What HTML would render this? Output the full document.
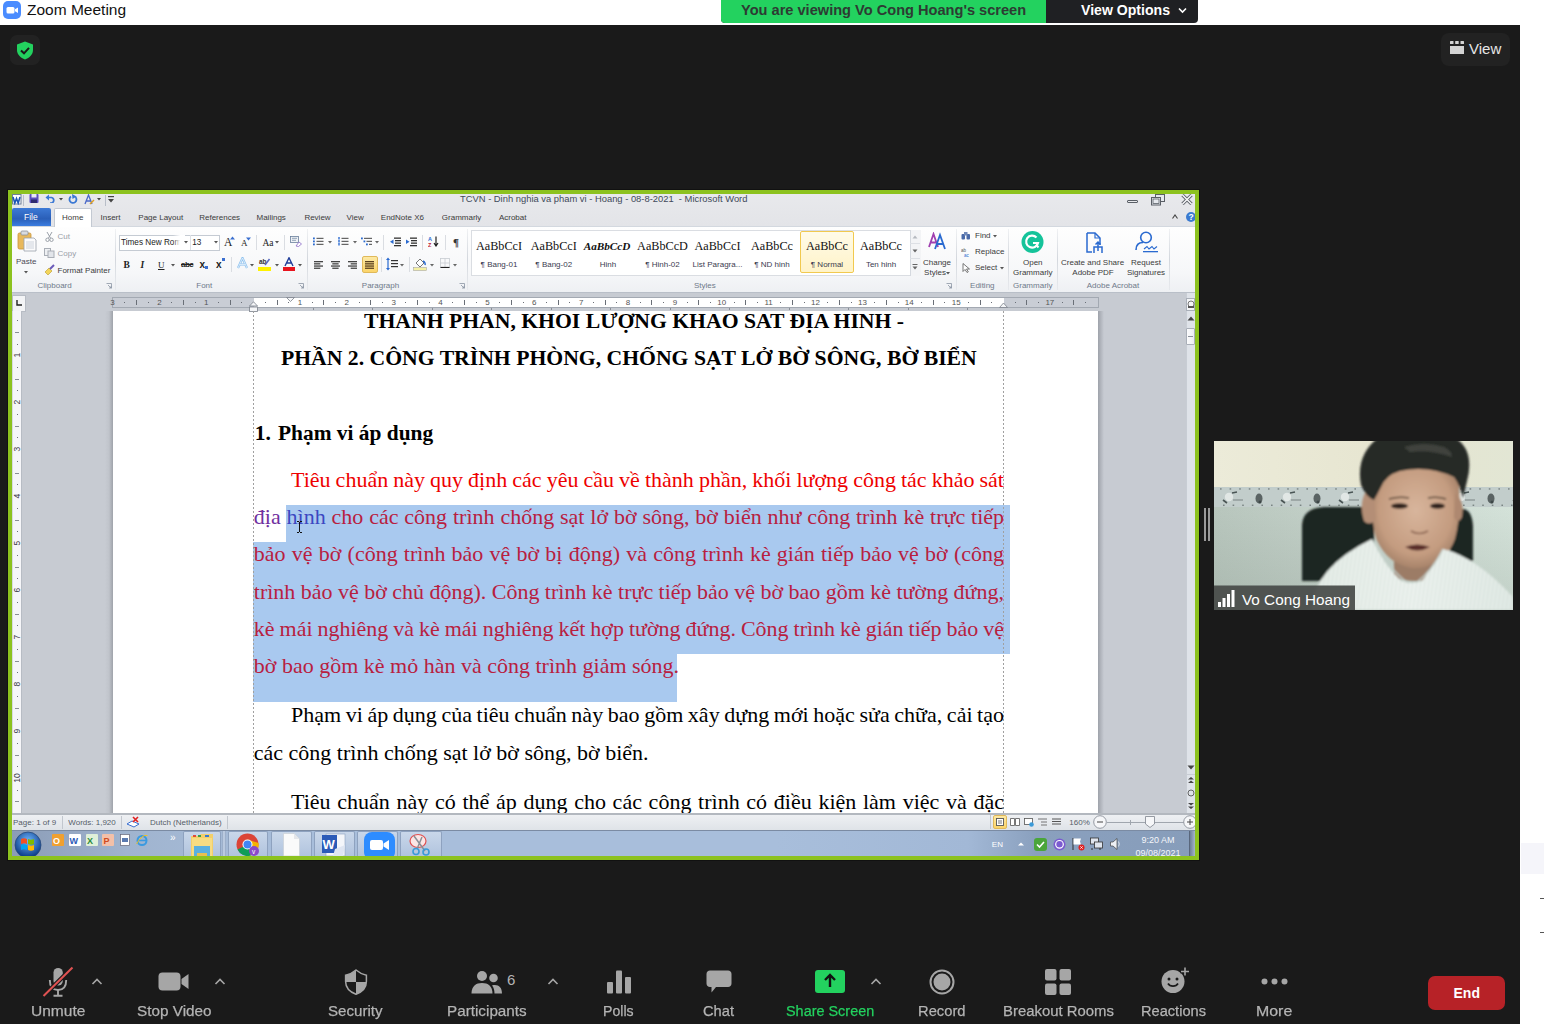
<!DOCTYPE html>
<html><head><meta charset="utf-8">
<style>
*{box-sizing:border-box}
body{margin:0;width:1544px;height:1024px;position:relative;overflow:hidden;background:#1a1a1a;font-family:"Liberation Sans",sans-serif}
.a{position:absolute;white-space:nowrap}
#title{left:0;top:0;width:1544px;height:25px;background:#fff}
#rstrip{left:1520px;top:25px;width:24px;height:999px;background:#fff}
.tl{color:#b4b4b4;font-size:15px;top:1003px;line-height:17px;-webkit-text-stroke:0.25px currentColor}
#W{left:0;top:0;width:1544px;height:1024px;clip-path:inset(194px 349px 168px 12px)}
.s{font-size:8px;line-height:9px;color:#3c3c3c}
.g{font-size:8px;line-height:9px;color:#6b7788}
.sep{width:1px;background:#d5d9df}
.d{font-family:"Liberation Serif",serif;font-size:22px;line-height:26px}
</style></head><body>

<div class="a" id="title">
  <svg class="a" style="left:3px;top:1px" width="18" height="18" viewBox="0 0 18 18"><rect width="18" height="18" rx="5" fill="#4a8cff"/><rect x="3.5" y="6" width="8" height="6.5" rx="1.5" fill="#fff"/><path d="M12 8.3 L15 6.5 V12 L12 10.2Z" fill="#fff"/></svg>
  <div class="a" style="left:27px;top:1px;font-size:15.5px;color:#111">Zoom Meeting</div>
</div>
<div class="a" id="rstrip"></div>
<div class="a" style="left:1521px;top:843px;width:23px;height:31px;background:#f5f5fa"></div>
<div class="a" style="left:1540px;top:898px;width:4px;height:1px;background:#555"></div>
<div class="a" style="left:1540px;top:932px;width:4px;height:1px;background:#555"></div>
<!-- banner -->
<div class="a" style="left:721px;top:0;width:477px;height:23px;border-radius:0 0 4px 4px;overflow:hidden;background:#1f2023">
  <div class="a" style="left:0;top:0;width:325px;height:23px;background:#23d25f"></div>
  <div class="a" style="left:20px;top:1.7px;font-size:14.6px;font-weight:bold;color:#2d3b33;line-height:17px">You are viewing Vo Cong Hoang's screen</div>
  <div class="a" style="left:360px;top:1.7px;font-size:14.1px;font-weight:bold;color:#fff;line-height:17px">View Options</div>
  <svg class="a" style="left:457px;top:7px" width="9" height="7" viewBox="0 0 9 7"><path d="M1 1.5 L4.5 5 L8 1.5" stroke="#fff" stroke-width="1.6" fill="none"/></svg>
</div>
<!-- shield -->
<div class="a" style="left:10px;top:35px;width:30px;height:30px;border-radius:7px;background:#222"></div>
<svg class="a" style="left:16px;top:41px" width="18" height="19" viewBox="0 0 18 19"><path d="M9 0.5 L17 3.5 V9 C17 13.5 13.5 16.8 9 18.5 C4.5 16.8 1 13.5 1 9 V3.5 Z" fill="#23d25f"/><path d="M5 9.5 L8 12.3 L13 6.8" stroke="#1a1a1a" stroke-width="2" fill="none"/></svg>
<!-- view button -->
<div class="a" style="left:1441px;top:33px;width:69px;height:33px;border-radius:8px;background:#222"></div>
<svg class="a" style="left:1450px;top:41px" width="14" height="13" viewBox="0 0 14 13"><rect x="0" y="0" width="3.5" height="3" rx=".5" fill="#d4d4d4"/><rect x="5.2" y="0" width="3.5" height="3" rx=".5" fill="#d4d4d4"/><rect x="10.5" y="0" width="3.5" height="3" rx=".5" fill="#d4d4d4"/><rect x="0" y="5" width="14" height="8" fill="#d4d4d4"/></svg>
<div class="a" style="left:1469px;top:39.5px;font-size:15px;color:#e6e6e6;line-height:17px">View</div>
<div class="a" style="left:7px;top:189px;width:1193px;height:672px;background:#111"></div>
<div class="a" style="left:8px;top:190px;width:1191px;height:670px;background:#8cc21f"></div>
<div class="a" id="W">
<div class="a" style="left:12px;top:194px;width:1183px;height:32px;background:linear-gradient(#e8e9ec,#e3e4e8)"></div>
<div class="a" style="left:12px;top:226px;width:1183px;height:67px;background:linear-gradient(#fefefe,#f6f7f9 70%,#eef0f3);border-top:1px solid #d3d8df;border-bottom:1px solid #b9bfc8"></div>
<div class="a" style="left:12px;top:293px;width:1183px;height:522px;background:#c7cbd2"></div>
<div class="a" style="left:105px;top:311px;width:8px;height:504px;background:linear-gradient(90deg,rgba(160,165,172,0),#c0c4cb 50%,#9fa3aa)"></div>
<div class="a" style="left:113px;top:311px;width:985px;height:504px;background:#fff"></div>
<div class="a" style="left:12px;top:813px;width:1183px;height:17px;background:linear-gradient(#eef0f3,#dfe3e8);border-top:2px solid #b3b8bf"></div>
<div class="a" style="left:12px;top:830px;width:1183px;height:26px;background:#a7bedb"></div>
<svg class="a" style="left:12px;top:194px" width="10" height="11" viewBox="0 0 10 11"><rect x="0.5" y="0.5" width="8.5" height="9.5" fill="#fff" stroke="#6f7f98"/><path d="M1 3 L2.8 9 L4.5 4.5 L6.2 9 L8 3" stroke="#1d56b4" stroke-width="1.6" fill="none"/></svg>
<div class="a" style="left:23px;top:195px;width:1px;height:11px;background:#b8bec8;"></div>
<svg class="a" style="left:29px;top:194px" width="10" height="9" viewBox="0 0 10 9"><rect x="0.5" y="0" width="9" height="9" rx="1" fill="#5b4fbf"/><rect x="2.5" y="0" width="5" height="3.5" fill="#e8e8f8"/><rect x="2" y="5.5" width="6" height="3.5" fill="#2e2a6e"/></svg>
<svg class="a" style="left:45px;top:194px" width="10" height="9" viewBox="0 0 10 9"><path d="M3 3.5 H6.5 A2.8 2.8 0 0 1 6.5 9 H5" stroke="#3a78d4" stroke-width="1.7" fill="none"/><path d="M0.5 3.5 L4 0.5 V6.5Z" fill="#3a78d4"/></svg>
<svg class="a" style="left:59px;top:198.3px" width="4" height="3" viewBox="0 0 4 3"><path d="M0 0H4L2 2.4Z" fill="#444"/></svg>
<svg class="a" style="left:68px;top:194px" width="10" height="10" viewBox="0 0 10 10"><path d="M7.5 3 A3.5 3.5 0 1 1 3 2.5" stroke="#3a78d4" stroke-width="1.8" fill="none"/><path d="M4 0 L8.5 2.5 L4.5 5Z" fill="#3a78d4"/></svg>
<svg class="a" style="left:84px;top:194px" width="11" height="11" viewBox="0 0 11 11"><path d="M1 10 L4.5 1 L8 10 M2.3 7 H6.7" stroke="#4a68c8" stroke-width="1.3" fill="none"/><path d="M6 10 L10 6" stroke="#e0a020" stroke-width="1.5"/></svg>
<svg class="a" style="left:97px;top:198.3px" width="4" height="3" viewBox="0 0 4 3"><path d="M0 0H4L2 2.4Z" fill="#444"/></svg>
<div class="a" style="left:105px;top:195px;width:1px;height:11px;background:#b8bec8;"></div>
<svg class="a" style="left:108px;top:196px" width="6" height="7" viewBox="0 0 6 7"><rect x="0" y="0" width="6" height="1.2" fill="#444"/><path d="M0 3H6L3 6.5Z" fill="#444"/></svg>
<div class="a" style="left:460px;top:193.49px;font-size:9.4px;line-height:12px;color:#3f4a5a;">TCVN - Dinh nghia va pham vi - Hoang - 08-8-2021&nbsp; - Microsoft Word</div>
<div class="a" style="left:1127px;top:200px;width:11px;height:3px;background:transparent;border:1px solid #5a5f66;border-radius:1px"></div>
<svg class="a" style="left:1151px;top:194px" width="15" height="12" viewBox="0 0 15 12"><rect x="4.5" y="0.5" width="9" height="7" fill="#e6e9ee" stroke="#5a5f66"/><rect x="0.5" y="3.5" width="9" height="7.5" fill="#e6e9ee" stroke="#5a5f66"/><rect x="2" y="5" width="6" height="4.5" fill="none" stroke="#5a5f66" stroke-width="0.8"/></svg>
<svg class="a" style="left:1181px;top:194px" width="12" height="11" viewBox="0 0 12 11"><path d="M1.5 1 L10.5 10 M10.5 1 L1.5 10" stroke="#5a5f66" stroke-width="3.2"/><path d="M1.5 1 L10.5 10 M10.5 1 L1.5 10" stroke="#f4f5f7" stroke-width="1.6"/></svg>
<div class="a" style="left:12px;top:208px;width:39px;height:18px;background:linear-gradient(#3d7ad6,#2a5fb8 60%,#3b7de0);border-radius:2px 2px 0 0"></div>
<div class="a" style="left:24px;top:212.09px;font-size:8.5px;line-height:11px;color:#fff;">File</div>
<div class="a" style="left:54px;top:208px;width:38px;height:19px;background:#fff;border:1px solid #c3c9d2;border-bottom:none;border-radius:2px 2px 0 0"></div>
<div class="a" style="left:62px;top:212.76px;font-size:8px;line-height:10px;color:#3b3b3b;">Home</div>
<div class="a" style="left:100.5px;top:212.76px;font-size:8px;line-height:10px;color:#3b3b3b;">Insert</div>
<div class="a" style="left:138.3px;top:212.76px;font-size:8px;line-height:10px;color:#3b3b3b;">Page Layout</div>
<div class="a" style="left:199.2px;top:212.76px;font-size:8px;line-height:10px;color:#3b3b3b;">References</div>
<div class="a" style="left:256.5px;top:212.76px;font-size:8px;line-height:10px;color:#3b3b3b;">Mailings</div>
<div class="a" style="left:304.4px;top:212.76px;font-size:8px;line-height:10px;color:#3b3b3b;">Review</div>
<div class="a" style="left:346.6px;top:212.76px;font-size:8px;line-height:10px;color:#3b3b3b;">View</div>
<div class="a" style="left:380.8px;top:212.76px;font-size:8px;line-height:10px;color:#3b3b3b;">EndNote X6</div>
<div class="a" style="left:441.8px;top:212.76px;font-size:8px;line-height:10px;color:#3b3b3b;">Grammarly</div>
<div class="a" style="left:498.9px;top:212.76px;font-size:8px;line-height:10px;color:#3b3b3b;">Acrobat</div>
<svg class="a" style="left:1172px;top:214px" width="6" height="5" viewBox="0 0 6 5"><path d="M0.5 4.5 L3 1 L5.5 4.5" stroke="#444" stroke-width="1.1" fill="none"/></svg>
<svg class="a" style="left:1186px;top:212px" width="10" height="10" viewBox="0 0 10 10"><circle cx="5" cy="5" r="5" fill="#3a7ad0"/><text x="5" y="8.3" font-size="8.5" font-weight="bold" text-anchor="middle" fill="#fff" font-family="Liberation Sans">?</text></svg>
<div class="a" style="left:115px;top:229px;width:1px;height:61px;background:linear-gradient(rgba(210,214,220,0.3),#d3d7dd 50%,rgba(210,214,220,0.3));"></div>
<div class="a" style="left:307px;top:229px;width:1px;height:61px;background:linear-gradient(rgba(210,214,220,0.3),#d3d7dd 50%,rgba(210,214,220,0.3));"></div>
<div class="a" style="left:467px;top:229px;width:1px;height:61px;background:linear-gradient(rgba(210,214,220,0.3),#d3d7dd 50%,rgba(210,214,220,0.3));"></div>
<div class="a" style="left:956px;top:229px;width:1px;height:61px;background:linear-gradient(rgba(210,214,220,0.3),#d3d7dd 50%,rgba(210,214,220,0.3));"></div>
<div class="a" style="left:1008px;top:229px;width:1px;height:61px;background:linear-gradient(rgba(210,214,220,0.3),#d3d7dd 50%,rgba(210,214,220,0.3));"></div>
<div class="a" style="left:1057px;top:229px;width:1px;height:61px;background:linear-gradient(rgba(210,214,220,0.3),#d3d7dd 50%,rgba(210,214,220,0.3));"></div>
<div class="a" style="left:1169px;top:229px;width:1px;height:61px;background:linear-gradient(rgba(210,214,220,0.3),#d3d7dd 50%,rgba(210,214,220,0.3));"></div>
<div class="a" style="left:37.475px;top:281.16px;font-size:8px;line-height:10px;color:#6f7a8a;">Clipboard</div>
<div class="a" style="left:196.2921875px;top:281.16px;font-size:8px;line-height:10px;color:#6f7a8a;">Font</div>
<div class="a" style="left:361.8203125px;top:281.16px;font-size:8px;line-height:10px;color:#6f7a8a;">Paragraph</div>
<div class="a" style="left:693.9015625px;top:281.16px;font-size:8px;line-height:10px;color:#6f7a8a;">Styles</div>
<div class="a" style="left:970.065625px;top:281.16px;font-size:8px;line-height:10px;color:#6f7a8a;">Editing</div>
<div class="a" style="left:1013.01875px;top:281.16px;font-size:8px;line-height:10px;color:#6f7a8a;">Grammarly</div>
<div class="a" style="left:1086.7578125px;top:281.16px;font-size:8px;line-height:10px;color:#6f7a8a;">Adobe Acrobat</div>
<svg class="a" style="left:106px;top:283px" width="6" height="6" viewBox="0 0 6 6"><path d="M0.5 0.5H5.5V5.5" stroke="#8a94a3" fill="none" stroke-width="0.8"/><path d="M2 2 L5 5 M3 5H5V3" stroke="#8a94a3" fill="none" stroke-width="0.8"/></svg>
<svg class="a" style="left:298px;top:283px" width="6" height="6" viewBox="0 0 6 6"><path d="M0.5 0.5H5.5V5.5" stroke="#8a94a3" fill="none" stroke-width="0.8"/><path d="M2 2 L5 5 M3 5H5V3" stroke="#8a94a3" fill="none" stroke-width="0.8"/></svg>
<svg class="a" style="left:459px;top:283px" width="6" height="6" viewBox="0 0 6 6"><path d="M0.5 0.5H5.5V5.5" stroke="#8a94a3" fill="none" stroke-width="0.8"/><path d="M2 2 L5 5 M3 5H5V3" stroke="#8a94a3" fill="none" stroke-width="0.8"/></svg>
<svg class="a" style="left:946px;top:283px" width="6" height="6" viewBox="0 0 6 6"><path d="M0.5 0.5H5.5V5.5" stroke="#8a94a3" fill="none" stroke-width="0.8"/><path d="M2 2 L5 5 M3 5H5V3" stroke="#8a94a3" fill="none" stroke-width="0.8"/></svg>
<svg class="a" style="left:17px;top:230px" width="20" height="22" viewBox="0 0 20 22"><rect x="1" y="3" width="13" height="16" rx="1.5" fill="#e8b85c" stroke="#c89438" stroke-width="0.8"/><rect x="4" y="1" width="7" height="4" rx="1" fill="#d8dbe0" stroke="#8e939b" stroke-width="0.8"/><path d="M7 8 H17 L19 10 V21 H7Z" fill="#fbfbfc" stroke="#9aa1ab" stroke-width="0.8"/><rect x="9" y="11" width="8" height="8" fill="#e4e7ec"/></svg>
<div class="a" style="left:16px;top:257.46px;font-size:8px;line-height:10px;color:#4a4a55;">Paste</div>
<svg class="a" style="left:23.7px;top:270.8px" width="4" height="3" viewBox="0 0 4 3"><path d="M0 0H4L2 2.4Z" fill="#555"/></svg>
<svg class="a" style="left:45px;top:232px" width="9" height="10" viewBox="0 0 9 10"><path d="M2 0 L5.5 6 M7 0 L3.5 6" stroke="#9aa0a8" stroke-width="1"/><circle cx="2.5" cy="7.8" r="1.7" fill="none" stroke="#9aa0a8"/><circle cx="6.5" cy="7.8" r="1.7" fill="none" stroke="#9aa0a8"/></svg>
<div class="a" style="left:57.5px;top:232.36px;font-size:8px;line-height:10px;color:#9aa0a8;">Cut</div>
<svg class="a" style="left:44px;top:248px" width="11" height="10" viewBox="0 0 11 10"><rect x="0.5" y="0.5" width="6" height="7" fill="#eef0f3" stroke="#a9aeb6"/><rect x="4" y="3" width="6" height="6.5" fill="#e2e5ea" stroke="#a9aeb6"/></svg>
<div class="a" style="left:57.5px;top:249.46px;font-size:8px;line-height:10px;color:#9aa0a8;">Copy</div>
<svg class="a" style="left:44px;top:264px" width="11" height="11" viewBox="0 0 11 11"><path d="M1 8 L5 4 L8 7 L4 11Z" fill="#f3d55b" stroke="#b89a2a" stroke-width="0.6"/><path d="M6 5 L10 1" stroke="#6a5ab8" stroke-width="2"/></svg>
<div class="a" style="left:57.5px;top:265.56px;font-size:8px;line-height:10px;color:#3b3b3b;">Format Painter</div>
<div class="a" style="left:118.5px;top:234.5px;width:101px;height:16px;background:#fff;border:1px solid #c5cbd3"></div>
<div class="a" style="left:190px;top:235px;width:1px;height:15px;background:#dde1e6;"></div>
<div class="a" style="left:121px;top:236.79px;font-size:8.2px;line-height:11px;color:#222;">Times New Rom</div>
<div class="a" style="left:173px;top:235px;width:12px;height:15px;background:linear-gradient(90deg,rgba(255,255,255,0),#fff 60%);"></div>
<svg class="a" style="left:183.8px;top:241.3px" width="4" height="3" viewBox="0 0 4 3"><path d="M0 0H4L2 2.4Z" fill="#555"/></svg>
<div class="a" style="left:192.3px;top:236.79px;font-size:8.2px;line-height:11px;color:#222;">13</div>
<svg class="a" style="left:213.6px;top:241.3px" width="4" height="3" viewBox="0 0 4 3"><path d="M0 0H4L2 2.4Z" fill="#555"/></svg>
<div class="a" style="left:224px;top:235.00px;font-size:11.5px;line-height:15px;color:#222;font-family:'Liberation Serif';">A</div>
<svg class="a" style="left:230px;top:236px" width="5" height="4" viewBox="0 0 5 4"><path d="M0 3.5 L2.5 0.5 L5 3.5Z" fill="#3a6fd0"/></svg>
<div class="a" style="left:241px;top:237.33px;font-size:9px;line-height:12px;color:#222;font-family:'Liberation Serif';">A</div>
<svg class="a" style="left:246px;top:237px" width="5" height="4" viewBox="0 0 5 4"><path d="M0 0.5 L2.5 3.5 L5 0.5Z" fill="#3a6fd0"/></svg>
<div class="a" style="left:255.7px;top:235px;width:1px;height:15px;background:#dadde2;"></div>
<div class="a" style="left:262.5px;top:237.16px;font-size:9.5px;line-height:12px;color:#222;font-family:'Liberation Serif';">Aa</div>
<svg class="a" style="left:275px;top:241.3px" width="4" height="3" viewBox="0 0 4 3"><path d="M0 0H4L2 2.4Z" fill="#555"/></svg>
<div class="a" style="left:284.2px;top:235px;width:1px;height:15px;background:#dadde2;"></div>
<svg class="a" style="left:290px;top:236px" width="12" height="11" viewBox="0 0 12 11"><rect x="0.5" y="0.5" width="8" height="6" fill="#eef1f5" stroke="#6a7f9c" stroke-width="0.8"/><path d="M2 2.3H7 M2 4.3H6" stroke="#6a7f9c" stroke-width="0.7"/><path d="M6 10 L9 6 L11.5 8 L8.5 10.5Z" fill="#fff" stroke="#8a6ac8" stroke-width="0.8"/></svg>
<div class="a" style="left:123.5px;top:258.86px;font-size:9.5px;line-height:12px;color:#222;font-weight:bold;font-family:'Liberation Serif';">B</div>
<div class="a" style="left:140.5px;top:258.86px;font-size:9.5px;line-height:12px;color:#222;font-family:'Liberation Serif';font-style:italic;font-weight:bold">I</div>
<div class="a" style="left:158px;top:258.53px;font-size:9px;line-height:12px;color:#222;font-family:'Liberation Serif';text-decoration:underline">U</div>
<svg class="a" style="left:171.2px;top:263.8px" width="4" height="3" viewBox="0 0 4 3"><path d="M0 0H4L2 2.4Z" fill="#555"/></svg>
<div class="a" style="left:181px;top:259.86px;font-size:8px;line-height:10px;color:#222;font-weight:bold;text-decoration:line-through;letter-spacing:-0.5px">abc</div>
<div class="a" style="left:199.4px;top:257.69px;font-size:10px;line-height:13px;color:#222;font-weight:bold;">x</div>
<svg class="a" style="left:205px;top:266px" width="3" height="3" viewBox="0 0 3 3"><rect width="3" height="3" fill="#3a6fd0"/></svg>
<div class="a" style="left:216px;top:257.69px;font-size:10px;line-height:13px;color:#222;font-weight:bold;">x</div>
<svg class="a" style="left:222px;top:258px" width="3" height="3" viewBox="0 0 3 3"><rect width="3" height="3" fill="#3a6fd0"/></svg>
<div class="a" style="left:231px;top:257px;width:1px;height:15px;background:#dadde2;"></div>
<svg class="a" style="left:237px;top:257px" width="11" height="12" viewBox="0 0 11 12"><path d="M1 11 L5.5 1 L10 11 M3 7.5 H8" stroke="#8cc0ee" stroke-width="2.2" fill="none"/><path d="M1 11 L5.5 1 L10 11 M3 7.5 H8" stroke="#eaf4fd" stroke-width="0.8" fill="none"/></svg>
<svg class="a" style="left:250.2px;top:263.8px" width="4" height="3" viewBox="0 0 4 3"><path d="M0 0H4L2 2.4Z" fill="#555"/></svg>
<svg class="a" style="left:258px;top:257px" width="13" height="14" viewBox="0 0 13 14"><text x="1" y="7" font-size="6.5" font-weight="bold" fill="#333" font-family="Liberation Sans">ab</text><path d="M7 8 L11.5 2" stroke="#5a6abf" stroke-width="1.6"/><rect x="0" y="10" width="13" height="4" fill="#fff200"/></svg>
<svg class="a" style="left:274.8px;top:263.8px" width="4" height="3" viewBox="0 0 4 3"><path d="M0 0H4L2 2.4Z" fill="#555"/></svg>
<svg class="a" style="left:283px;top:257px" width="12" height="14" viewBox="0 0 12 14"><path d="M2 9 L6 0.8 L10 9 M3.7 6 H8.3" stroke="#1f3d99" stroke-width="1.4" fill="none"/><rect x="0" y="10" width="12" height="4" fill="#e8141e"/></svg>
<svg class="a" style="left:298.4px;top:263.8px" width="4" height="3" viewBox="0 0 4 3"><path d="M0 0H4L2 2.4Z" fill="#555"/></svg>
<svg class="a" style="left:313px;top:237px" width="11" height="10" viewBox="0 0 11 10"><rect x="0" y="0.5" width="1.8" height="1.8" fill="#2a6ad0"/><rect x="3.5" y="0.8" width="7" height="1.1" fill="#555"/><rect x="0" y="3.5" width="1.8" height="1.8" fill="#2a6ad0"/><rect x="3.5" y="3.8" width="7" height="1.1" fill="#555"/><rect x="0" y="6.5" width="1.8" height="1.8" fill="#2a6ad0"/><rect x="3.5" y="6.8" width="7" height="1.1" fill="#555"/></svg>
<svg class="a" style="left:328.3px;top:240.8px" width="4" height="3" viewBox="0 0 4 3"><path d="M0 0H4L2 2.4Z" fill="#666"/></svg>
<svg class="a" style="left:338px;top:237px" width="11" height="10" viewBox="0 0 11 10"><rect x="0.3" y="0" width="1.4" height="2.5" fill="#2a6ad0"/><rect x="3.5" y="0.8" width="7" height="1.1" fill="#555"/><rect x="0.3" y="3" width="1.4" height="2.5" fill="#2a6ad0"/><rect x="3.5" y="3.8" width="7" height="1.1" fill="#555"/><rect x="0.3" y="6" width="1.4" height="2.5" fill="#2a6ad0"/><rect x="3.5" y="6.8" width="7" height="1.1" fill="#555"/></svg>
<svg class="a" style="left:353px;top:240.8px" width="4" height="3" viewBox="0 0 4 3"><path d="M0 0H4L2 2.4Z" fill="#666"/></svg>
<svg class="a" style="left:361px;top:237px" width="12" height="11" viewBox="0 0 12 11"><rect x="0" y="0.5" width="1.8" height="1.8" fill="#2a6ad0"/><rect x="3" y="0.8" width="8" height="1.1" fill="#555"/><rect x="2.5" y="3.5" width="1.8" height="1.8" fill="#2a6ad0"/><rect x="5.5" y="3.8" width="5.5" height="1.1" fill="#555"/><rect x="5" y="6.5" width="1.8" height="1.8" fill="#2a6ad0"/><rect x="8" y="6.8" width="3" height="1.1" fill="#555"/></svg>
<svg class="a" style="left:374.6px;top:240.8px" width="4" height="3" viewBox="0 0 4 3"><path d="M0 0H4L2 2.4Z" fill="#666"/></svg>
<div class="a" style="left:383.4px;top:235px;width:1px;height:15px;background:#dadde2;"></div>
<svg class="a" style="left:390px;top:237px" width="11" height="10" viewBox="0 0 11 10"><rect x="4" y="0.5" width="7" height="1.3" fill="#333"/><rect x="5" y="3" width="6" height="1.3" fill="#333"/><rect x="5" y="5.5" width="6" height="1.3" fill="#333"/><rect x="4" y="8" width="7" height="1.3" fill="#333"/><path d="M0 4.8 L3.5 2.5 V7Z" fill="#2a6ad0"/></svg>
<svg class="a" style="left:406px;top:237px" width="11" height="10" viewBox="0 0 11 10"><rect x="4" y="0.5" width="7" height="1.3" fill="#333"/><rect x="5" y="3" width="6" height="1.3" fill="#333"/><rect x="5" y="5.5" width="6" height="1.3" fill="#333"/><rect x="4" y="8" width="7" height="1.3" fill="#333"/><path d="M3.5 4.8 L0 2.5 V7Z" fill="#2a6ad0"/></svg>
<div class="a" style="left:422.3px;top:235px;width:1px;height:15px;background:#dadde2;"></div>
<svg class="a" style="left:428px;top:236px" width="11" height="11" viewBox="0 0 11 11"><text x="0" y="5" font-size="5.5" fill="#2a6ad0" font-family="Liberation Sans" font-weight="bold">A</text><text x="0" y="10.5" font-size="5.5" fill="#c02030" font-family="Liberation Sans" font-weight="bold">Z</text><path d="M8 0.5 V9 M6 7 L8 10 L10 7" stroke="#222" stroke-width="1.2" fill="none"/></svg>
<div class="a" style="left:445.4px;top:235px;width:1px;height:15px;background:#dadde2;"></div>
<div class="a" style="left:453px;top:234.86px;font-size:11px;line-height:14px;color:#333;font-weight:bold;font-family:'Liberation Serif';">¶</div>
<svg class="a" style="left:314px;top:259.5px" width="9" height="10" viewBox="0 0 9 10"><rect x="0.0" y="1.0" width="9.0" height="1.3" fill="#444"/><rect x="0.0" y="3.2" width="6.3" height="1.3" fill="#444"/><rect x="0.0" y="5.4" width="9.0" height="1.3" fill="#444"/><rect x="0.0" y="7.6" width="6.3" height="1.3" fill="#444"/></svg>
<svg class="a" style="left:331px;top:259.5px" width="9" height="10" viewBox="0 0 9 10"><rect x="0.0" y="1.0" width="9.0" height="1.3" fill="#444"/><rect x="1.3" y="3.2" width="6.3" height="1.3" fill="#444"/><rect x="0.0" y="5.4" width="9.0" height="1.3" fill="#444"/><rect x="1.3" y="7.6" width="6.3" height="1.3" fill="#444"/></svg>
<svg class="a" style="left:348px;top:259.5px" width="9" height="10" viewBox="0 0 9 10"><rect x="0.0" y="1.0" width="9.0" height="1.3" fill="#444"/><rect x="2.7" y="3.2" width="6.3" height="1.3" fill="#444"/><rect x="0.0" y="5.4" width="9.0" height="1.3" fill="#444"/><rect x="2.7" y="7.6" width="6.3" height="1.3" fill="#444"/></svg>
<div class="a" style="left:361.5px;top:256.3px;width:16.5px;height:16.5px;background:linear-gradient(#fde9a4,#fbd46a);border:1px solid #e0b95a;border-radius:2px"></div>
<svg class="a" style="left:365px;top:259.5px" width="9" height="10" viewBox="0 0 9 10"><rect x="0.0" y="1.0" width="9.0" height="1.3" fill="#5a4020"/><rect x="0.0" y="3.2" width="9.0" height="1.3" fill="#5a4020"/><rect x="0.0" y="5.4" width="9.0" height="1.3" fill="#5a4020"/><rect x="0.0" y="7.6" width="9.0" height="1.3" fill="#5a4020"/></svg>
<div class="a" style="left:380.8px;top:257px;width:1px;height:15px;background:#dadde2;"></div>
<svg class="a" style="left:386px;top:257px" width="12" height="14" viewBox="0 0 12 14"><path d="M2 0.5 L0 3 H4Z M2 13.5 L0 11 H4Z" fill="#2a6ad0"/><rect x="1.4" y="3" width="1.2" height="8" fill="#2a6ad0"/><rect x="5" y="3" width="7" height="1.2" fill="#333"/><rect x="5" y="6" width="7" height="1.2" fill="#333"/><rect x="5" y="9" width="7" height="1.2" fill="#333"/></svg>
<svg class="a" style="left:399.7px;top:263.8px" width="4" height="3" viewBox="0 0 4 3"><path d="M0 0H4L2 2.4Z" fill="#666"/></svg>
<div class="a" style="left:409px;top:257px;width:1px;height:15px;background:#dadde2;"></div>
<svg class="a" style="left:413px;top:257px" width="14" height="14" viewBox="0 0 14 14"><path d="M3 6 L7 2 L11 6 L7 10Z" fill="#fff" stroke="#555" stroke-width="0.8"/><path d="M10 4 C12 5 12.5 7 12 8" stroke="#2a6ad0" stroke-width="1.5" fill="none"/><rect x="0.5" y="10.5" width="13" height="3" fill="#f5f0a0" stroke="#999" stroke-width="0.5"/></svg>
<svg class="a" style="left:430.2px;top:263.8px" width="4" height="3" viewBox="0 0 4 3"><path d="M0 0H4L2 2.4Z" fill="#666"/></svg>
<svg class="a" style="left:440px;top:258px" width="10" height="10" viewBox="0 0 10 10"><rect x="0.5" y="0.5" width="9" height="9" fill="none" stroke="#c8ccd2" stroke-width="0.8"/><path d="M5 0.5 V9.5 M0.5 5 H9.5" stroke="#c8ccd2" stroke-width="0.8"/><path d="M0.5 9.5 H9.5" stroke="#222" stroke-width="1.2"/></svg>
<svg class="a" style="left:453.3px;top:263.8px" width="4" height="3" viewBox="0 0 4 3"><path d="M0 0H4L2 2.4Z" fill="#666"/></svg>
<div class="a" style="left:471px;top:230px;width:450px;height:46px;background:#fff;border:1px solid #dadde2"></div>
<div class="a" style="left:475.984375px;top:237.97px;font-size:12.2px;line-height:16px;color:#111;font-family:'Liberation Serif';">AaBbCcI</div>
<div class="a" style="left:480.6171875px;top:259.76px;font-size:8px;line-height:10px;color:#3b3b50;">¶ Bang-01</div>
<div class="a" style="left:530.734375px;top:237.97px;font-size:12.2px;line-height:16px;color:#111;font-family:'Liberation Serif';">AaBbCcI</div>
<div class="a" style="left:535.3671875px;top:259.76px;font-size:8px;line-height:10px;color:#3b3b50;">¶ Bang-02</div>
<div class="a" style="left:583.7578125px;top:238.80px;font-size:11.2px;line-height:15px;color:#111;font-weight:bold;font-family:'Liberation Serif';font-style:italic;">AaBbCcD</div>
<div class="a" style="left:599.7734375px;top:259.76px;font-size:8px;line-height:10px;color:#3b3b50;">Hinh</div>
<div class="a" style="left:637.109375px;top:237.97px;font-size:12.2px;line-height:16px;color:#111;font-family:'Liberation Serif';">AaBbCcD</div>
<div class="a" style="left:645.2265625px;top:259.76px;font-size:8px;line-height:10px;color:#3b3b50;">¶ Hinh-02</div>
<div class="a" style="left:694.484375px;top:237.97px;font-size:12.2px;line-height:16px;color:#111;font-family:'Liberation Serif';">AaBbCcI</div>
<div class="a" style="left:692.59375px;top:259.76px;font-size:8px;line-height:10px;color:#3b3b50;">List Paragra...</div>
<div class="a" style="left:751.0078125px;top:237.97px;font-size:12.2px;line-height:16px;color:#111;font-family:'Liberation Serif';">AaBbCc</div>
<div class="a" style="left:754.2890625px;top:259.76px;font-size:8px;line-height:10px;color:#3b3b50;">¶ ND hinh</div>
<div class="a" style="left:799.5px;top:231.2px;width:54.5px;height:42.2px;background:linear-gradient(#fffbe8,#fff3c8);border:1px solid #f1c94f;border-radius:2px"></div>
<div class="a" style="left:806.0078125px;top:237.97px;font-size:12.2px;line-height:16px;color:#111;font-family:'Liberation Serif';">AaBbCc</div>
<div class="a" style="left:810.84375px;top:259.76px;font-size:8px;line-height:10px;color:#3b3b50;">¶ Normal</div>
<div class="a" style="left:860.0078125px;top:237.97px;font-size:12.2px;line-height:16px;color:#111;font-family:'Liberation Serif';">AaBbCc</div>
<div class="a" style="left:865.875px;top:259.76px;font-size:8px;line-height:10px;color:#3b3b50;">Ten hinh</div>
<div class="a" style="left:909.5px;top:230px;width:11px;height:46px;background:#f3f4f6;border-left:1px solid #d5d9df"></div>
<div class="a" style="left:910px;top:243px;width:10px;height:1px;background:#dde0e5;"></div>
<div class="a" style="left:910px;top:258px;width:10px;height:1px;background:#dde0e5;"></div>
<svg class="a" style="left:912px;top:235px" width="6" height="4" viewBox="0 0 6 4"><path d="M0.5 3.5 L3 0.5 L5.5 3.5Z" fill="#b5b9bf"/></svg>
<svg class="a" style="left:912px;top:249px" width="6" height="4" viewBox="0 0 6 4"><path d="M0.5 0.5 L3 3.5 L5.5 0.5Z" fill="#666"/></svg>
<svg class="a" style="left:912px;top:264px" width="6" height="6" viewBox="0 0 6 6"><rect x="0.5" y="0" width="5" height="1" fill="#666"/><path d="M0.5 2.5 L3 5.5 L5.5 2.5Z" fill="#666"/></svg>
<svg class="a" style="left:928px;top:232px" width="19" height="19" viewBox="0 0 19 19"><path d="M1 15 L5.5 2 L10 15 M3 10.5 H8" stroke="#a040b0" stroke-width="1.8" fill="none"/><path d="M7 17 L12 3 L17 17 M9 12 H15" stroke="#2a6ad0" stroke-width="1.8" fill="none"/></svg>
<div class="a" style="left:922.984375px;top:258.16px;font-size:8px;line-height:10px;color:#3b3b3b;">Change</div>
<div class="a" style="left:924.1015625px;top:268.46px;font-size:8px;line-height:10px;color:#3b3b3b;">Styles</div>
<svg class="a" style="left:945.5px;top:272.3px" width="4" height="3" viewBox="0 0 4 3"><path d="M0 0H4L2 2.4Z" fill="#555"/></svg>
<svg class="a" style="left:961px;top:232px" width="10" height="8" viewBox="0 0 10 8"><rect x="0.5" y="2" width="3.5" height="5.5" rx="1" fill="#4a6aa8"/><rect x="5.5" y="2" width="3.5" height="5.5" rx="1" fill="#4a6aa8"/><rect x="3" y="0" width="3.5" height="3.5" fill="#6f88b8"/></svg>
<div class="a" style="left:975px;top:230.96px;font-size:8px;line-height:10px;color:#3b3b3b;">Find</div>
<svg class="a" style="left:992.5px;top:234.8px" width="4" height="3" viewBox="0 0 4 3"><path d="M0 0H4L2 2.4Z" fill="#555"/></svg>
<svg class="a" style="left:961px;top:248px" width="10" height="9" viewBox="0 0 10 9"><text x="0" y="4" font-size="4.5" fill="#555" font-family="Liberation Sans">ab</text><text x="3" y="9" font-size="4.5" fill="#2a6ad0" font-family="Liberation Sans">ac</text></svg>
<div class="a" style="left:975px;top:247.26px;font-size:8px;line-height:10px;color:#3b3b3b;">Replace</div>
<svg class="a" style="left:962px;top:263px" width="8" height="10" viewBox="0 0 8 10"><path d="M1 0.5 V8.5 L3 6.5 L5 9.5 L6.3 8.8 L4.5 6 H7.5Z" fill="#fff" stroke="#555" stroke-width="0.8"/></svg>
<div class="a" style="left:975px;top:263.06px;font-size:8px;line-height:10px;color:#3b3b3b;">Select</div>
<svg class="a" style="left:999.5px;top:266.8px" width="4" height="3" viewBox="0 0 4 3"><path d="M0 0H4L2 2.4Z" fill="#555"/></svg>
<svg class="a" style="left:1021px;top:231px" width="23" height="22" viewBox="0 0 23 22"><circle cx="11.5" cy="11" r="11" fill="#15c39a"/><path d="M15.5 6.5 A6 6 0 1 0 17 12 H12" stroke="#fff" stroke-width="2.2" fill="none"/><path d="M15 13.5 L17.5 16.5" stroke="#fff" stroke-width="2"/></svg>
<div class="a" style="left:1023.0109375px;top:258.16px;font-size:8px;line-height:10px;color:#3b3b3b;">Open</div>
<div class="a" style="left:1013.01875px;top:268.46px;font-size:8px;line-height:10px;color:#3b3b3b;">Grammarly</div>
<svg class="a" style="left:1084px;top:232px" width="20" height="22" viewBox="0 0 20 22"><path d="M3 1 H11 L16 6 V13" stroke="#2a6ad0" stroke-width="1.5" fill="none"/><path d="M3 1 V20 H8" stroke="#2a6ad0" stroke-width="1.5" fill="none"/><path d="M11 1 V6 H16" stroke="#2a6ad0" stroke-width="1.2" fill="none"/><path d="M10 21 V15 H18 V21" stroke="#2a6ad0" stroke-width="1.5" fill="none"/><path d="M14 19 V10 M11.5 12.5 L14 10 L16.5 12.5" stroke="#2a6ad0" stroke-width="1.5" fill="none"/></svg>
<div class="a" style="left:1061.021875px;top:258.16px;font-size:8px;line-height:10px;color:#3b3b3b;">Create and Share</div>
<div class="a" style="left:1072.3203125px;top:268.46px;font-size:8px;line-height:10px;color:#3b3b3b;">Adobe PDF</div>
<svg class="a" style="left:1133px;top:231px" width="26" height="22" viewBox="0 0 26 22"><circle cx="13" cy="6.5" r="5.3" stroke="#2a6ad0" stroke-width="1.6" fill="none"/><path d="M3 19 C3 13 7 11.5 10 11.5" stroke="#2a6ad0" stroke-width="1.6" fill="none"/><path d="M11 18 L14 15.5 L16 18 L19 15.5 L21 18 L24 15.5" stroke="#2a6ad0" stroke-width="1.1" fill="none"/><rect x="10" y="20" width="15" height="1.3" fill="#2a6ad0"/></svg>
<div class="a" style="left:1131.1015625px;top:258.16px;font-size:8px;line-height:10px;color:#3b3b3b;">Request</div>
<div class="a" style="left:1126.875px;top:268.46px;font-size:8px;line-height:10px;color:#3b3b3b;">Signatures</div>
<div class="a" style="left:12px;top:294.5px;width:14px;height:17px;background:#f3f4f6;border:1px solid #b7bcc4"></div>
<svg class="a" style="left:16px;top:300px" width="6" height="6" viewBox="0 0 6 6"><path d="M1 0 V5 H6" stroke="#222" stroke-width="1.4" fill="none"/></svg>
<div class="a" style="left:112px;top:297px;width:987px;height:11px;background:#c9cdd5;border:1px solid #a3a9b2"></div>
<div class="a" style="left:253.5px;top:298px;width:750px;height:9px;background:#fff;"></div>
<div class="a" style="left:110.26343750000001px;top:298.16px;font-size:8px;line-height:10px;color:#555;">3</div>
<div class="a" style="left:124px;top:302px;width:1px;height:1px;background:#6a6f77;"></div>
<div class="a" style="left:136px;top:300px;width:1px;height:5px;background:#6a6f77;"></div>
<div class="a" style="left:148px;top:302px;width:1px;height:1px;background:#6a6f77;"></div>
<div class="a" style="left:157.1334375px;top:298.16px;font-size:8px;line-height:10px;color:#555;">2</div>
<div class="a" style="left:171px;top:302px;width:1px;height:1px;background:#6a6f77;"></div>
<div class="a" style="left:183px;top:300px;width:1px;height:5px;background:#6a6f77;"></div>
<div class="a" style="left:195px;top:302px;width:1px;height:1px;background:#6a6f77;"></div>
<div class="a" style="left:204.0034375px;top:298.16px;font-size:8px;line-height:10px;color:#555;">1</div>
<div class="a" style="left:218px;top:302px;width:1px;height:1px;background:#6a6f77;"></div>
<div class="a" style="left:230px;top:300px;width:1px;height:5px;background:#6a6f77;"></div>
<div class="a" style="left:241px;top:302px;width:1px;height:1px;background:#6a6f77;"></div>
<div class="a" style="left:265px;top:302px;width:1px;height:1px;background:#6a6f77;"></div>
<div class="a" style="left:277px;top:300px;width:1px;height:5px;background:#6a6f77;"></div>
<div class="a" style="left:288px;top:302px;width:1px;height:1px;background:#6a6f77;"></div>
<div class="a" style="left:297.74343749999997px;top:298.16px;font-size:8px;line-height:10px;color:#555;">1</div>
<div class="a" style="left:312px;top:302px;width:1px;height:1px;background:#6a6f77;"></div>
<div class="a" style="left:323px;top:300px;width:1px;height:5px;background:#6a6f77;"></div>
<div class="a" style="left:335px;top:302px;width:1px;height:1px;background:#6a6f77;"></div>
<div class="a" style="left:344.6134375px;top:298.16px;font-size:8px;line-height:10px;color:#555;">2</div>
<div class="a" style="left:359px;top:302px;width:1px;height:1px;background:#6a6f77;"></div>
<div class="a" style="left:370px;top:300px;width:1px;height:5px;background:#6a6f77;"></div>
<div class="a" style="left:382px;top:302px;width:1px;height:1px;background:#6a6f77;"></div>
<div class="a" style="left:391.4834375px;top:298.16px;font-size:8px;line-height:10px;color:#555;">3</div>
<div class="a" style="left:405px;top:302px;width:1px;height:1px;background:#6a6f77;"></div>
<div class="a" style="left:417px;top:300px;width:1px;height:5px;background:#6a6f77;"></div>
<div class="a" style="left:429px;top:302px;width:1px;height:1px;background:#6a6f77;"></div>
<div class="a" style="left:438.3534375px;top:298.16px;font-size:8px;line-height:10px;color:#555;">4</div>
<div class="a" style="left:452px;top:302px;width:1px;height:1px;background:#6a6f77;"></div>
<div class="a" style="left:464px;top:300px;width:1px;height:5px;background:#6a6f77;"></div>
<div class="a" style="left:476px;top:302px;width:1px;height:1px;background:#6a6f77;"></div>
<div class="a" style="left:485.2234375px;top:298.16px;font-size:8px;line-height:10px;color:#555;">5</div>
<div class="a" style="left:499px;top:302px;width:1px;height:1px;background:#6a6f77;"></div>
<div class="a" style="left:511px;top:300px;width:1px;height:5px;background:#6a6f77;"></div>
<div class="a" style="left:523px;top:302px;width:1px;height:1px;background:#6a6f77;"></div>
<div class="a" style="left:532.0934374999999px;top:298.16px;font-size:8px;line-height:10px;color:#555;">6</div>
<div class="a" style="left:546px;top:302px;width:1px;height:1px;background:#6a6f77;"></div>
<div class="a" style="left:558px;top:300px;width:1px;height:5px;background:#6a6f77;"></div>
<div class="a" style="left:569px;top:302px;width:1px;height:1px;background:#6a6f77;"></div>
<div class="a" style="left:578.9634374999999px;top:298.16px;font-size:8px;line-height:10px;color:#555;">7</div>
<div class="a" style="left:593px;top:302px;width:1px;height:1px;background:#6a6f77;"></div>
<div class="a" style="left:605px;top:300px;width:1px;height:5px;background:#6a6f77;"></div>
<div class="a" style="left:616px;top:302px;width:1px;height:1px;background:#6a6f77;"></div>
<div class="a" style="left:625.8334375px;top:298.16px;font-size:8px;line-height:10px;color:#555;">8</div>
<div class="a" style="left:640px;top:302px;width:1px;height:1px;background:#6a6f77;"></div>
<div class="a" style="left:651px;top:300px;width:1px;height:5px;background:#6a6f77;"></div>
<div class="a" style="left:663px;top:302px;width:1px;height:1px;background:#6a6f77;"></div>
<div class="a" style="left:672.7034375px;top:298.16px;font-size:8px;line-height:10px;color:#555;">9</div>
<div class="a" style="left:687px;top:302px;width:1px;height:1px;background:#6a6f77;"></div>
<div class="a" style="left:698px;top:300px;width:1px;height:5px;background:#6a6f77;"></div>
<div class="a" style="left:710px;top:302px;width:1px;height:1px;background:#6a6f77;"></div>
<div class="a" style="left:717.346875px;top:298.16px;font-size:8px;line-height:10px;color:#555;">10</div>
<div class="a" style="left:734px;top:302px;width:1px;height:1px;background:#6a6f77;"></div>
<div class="a" style="left:745px;top:300px;width:1px;height:5px;background:#6a6f77;"></div>
<div class="a" style="left:757px;top:302px;width:1px;height:1px;background:#6a6f77;"></div>
<div class="a" style="left:764.51375px;top:298.16px;font-size:8px;line-height:10px;color:#555;">11</div>
<div class="a" style="left:780px;top:302px;width:1px;height:1px;background:#6a6f77;"></div>
<div class="a" style="left:792px;top:300px;width:1px;height:5px;background:#6a6f77;"></div>
<div class="a" style="left:804px;top:302px;width:1px;height:1px;background:#6a6f77;"></div>
<div class="a" style="left:811.086875px;top:298.16px;font-size:8px;line-height:10px;color:#555;">12</div>
<div class="a" style="left:827px;top:302px;width:1px;height:1px;background:#6a6f77;"></div>
<div class="a" style="left:839px;top:300px;width:1px;height:5px;background:#6a6f77;"></div>
<div class="a" style="left:851px;top:302px;width:1px;height:1px;background:#6a6f77;"></div>
<div class="a" style="left:857.956875px;top:298.16px;font-size:8px;line-height:10px;color:#555;">13</div>
<div class="a" style="left:874px;top:302px;width:1px;height:1px;background:#6a6f77;"></div>
<div class="a" style="left:886px;top:300px;width:1px;height:5px;background:#6a6f77;"></div>
<div class="a" style="left:898px;top:302px;width:1px;height:1px;background:#6a6f77;"></div>
<div class="a" style="left:904.826875px;top:298.16px;font-size:8px;line-height:10px;color:#555;">14</div>
<div class="a" style="left:921px;top:302px;width:1px;height:1px;background:#6a6f77;"></div>
<div class="a" style="left:933px;top:300px;width:1px;height:5px;background:#6a6f77;"></div>
<div class="a" style="left:944px;top:302px;width:1px;height:1px;background:#6a6f77;"></div>
<div class="a" style="left:951.696875px;top:298.16px;font-size:8px;line-height:10px;color:#555;">15</div>
<div class="a" style="left:968px;top:302px;width:1px;height:1px;background:#6a6f77;"></div>
<div class="a" style="left:980px;top:300px;width:1px;height:5px;background:#6a6f77;"></div>
<div class="a" style="left:991px;top:302px;width:1px;height:1px;background:#6a6f77;"></div>
<div class="a" style="left:1015px;top:302px;width:1px;height:1px;background:#6a6f77;"></div>
<div class="a" style="left:1026px;top:300px;width:1px;height:5px;background:#6a6f77;"></div>
<div class="a" style="left:1038px;top:302px;width:1px;height:1px;background:#6a6f77;"></div>
<div class="a" style="left:1045.4368749999999px;top:298.16px;font-size:8px;line-height:10px;color:#555;">17</div>
<div class="a" style="left:1062px;top:302px;width:1px;height:1px;background:#6a6f77;"></div>
<div class="a" style="left:1073px;top:300px;width:1px;height:5px;background:#6a6f77;"></div>
<div class="a" style="left:1085px;top:302px;width:1px;height:1px;background:#6a6f77;"></div>
<div class="a" style="left:313px;top:308px;width:1px;height:2px;background:#8a8f97;"></div>
<div class="a" style="left:372px;top:308px;width:1px;height:2px;background:#8a8f97;"></div>
<div class="a" style="left:432px;top:308px;width:1px;height:2px;background:#8a8f97;"></div>
<div class="a" style="left:491px;top:308px;width:1px;height:2px;background:#8a8f97;"></div>
<div class="a" style="left:551px;top:308px;width:1px;height:2px;background:#8a8f97;"></div>
<div class="a" style="left:610px;top:308px;width:1px;height:2px;background:#8a8f97;"></div>
<div class="a" style="left:670px;top:308px;width:1px;height:2px;background:#8a8f97;"></div>
<div class="a" style="left:729px;top:308px;width:1px;height:2px;background:#8a8f97;"></div>
<div class="a" style="left:789px;top:308px;width:1px;height:2px;background:#8a8f97;"></div>
<div class="a" style="left:848px;top:308px;width:1px;height:2px;background:#8a8f97;"></div>
<div class="a" style="left:908px;top:308px;width:1px;height:2px;background:#8a8f97;"></div>
<div class="a" style="left:967px;top:308px;width:1px;height:2px;background:#8a8f97;"></div>
<svg class="a" style="left:286px;top:296.5px" width="9" height="5" viewBox="0 0 9 5"><path d="M0.5 0.5 H8.5 L4.5 4.5Z" fill="#f5f6f8" stroke="#7a808a" stroke-width="0.8"/></svg>
<svg class="a" style="left:249px;top:301px" width="9" height="11" viewBox="0 0 9 11"><path d="M0.5 5 L4.5 0.8 L8.5 5Z" fill="#f5f6f8" stroke="#7a808a" stroke-width="0.8"/><rect x="0.5" y="6" width="8" height="4.5" fill="#f5f6f8" stroke="#7a808a" stroke-width="0.8"/></svg>
<svg class="a" style="left:999px;top:301.5px" width="9" height="6" viewBox="0 0 9 6"><path d="M0.5 5.5 L4.5 1 L8.5 5.5Z" fill="#f5f6f8" stroke="#7a808a" stroke-width="0.8"/></svg>
<div class="a" style="left:12px;top:311px;width:10px;height:502px;background:#f6f6f9;border-right:1px solid #b7bcc4;border-left:1px solid #d8dbe0"></div>
<div class="a" style="left:16.5px;top:320px;width:1px;height:1px;background:#6a6f77;"></div>
<div class="a" style="left:15px;top:332px;width:4px;height:1px;background:#8a8f97;"></div>
<div class="a" style="left:16.5px;top:344px;width:1px;height:1px;background:#6a6f77;"></div>
<div class="a" style="left:12px;top:349.3px;width:10px;height:12px;font-size:8.5px;line-height:12px;color:#3a3a48;text-align:center;transform:rotate(-90deg)">1</div>
<div class="a" style="left:16.5px;top:367px;width:1px;height:1px;background:#6a6f77;"></div>
<div class="a" style="left:15px;top:379px;width:4px;height:1px;background:#8a8f97;"></div>
<div class="a" style="left:16.5px;top:390px;width:1px;height:1px;background:#6a6f77;"></div>
<div class="a" style="left:12px;top:396.2px;width:10px;height:12px;font-size:8.5px;line-height:12px;color:#3a3a48;text-align:center;transform:rotate(-90deg)">2</div>
<div class="a" style="left:16.5px;top:414px;width:1px;height:1px;background:#6a6f77;"></div>
<div class="a" style="left:15px;top:426px;width:4px;height:1px;background:#8a8f97;"></div>
<div class="a" style="left:16.5px;top:437px;width:1px;height:1px;background:#6a6f77;"></div>
<div class="a" style="left:12px;top:443.2px;width:10px;height:12px;font-size:8.5px;line-height:12px;color:#3a3a48;text-align:center;transform:rotate(-90deg)">3</div>
<div class="a" style="left:16.5px;top:461px;width:1px;height:1px;background:#6a6f77;"></div>
<div class="a" style="left:15px;top:473px;width:4px;height:1px;background:#8a8f97;"></div>
<div class="a" style="left:16.5px;top:484px;width:1px;height:1px;background:#6a6f77;"></div>
<div class="a" style="left:12px;top:490.2px;width:10px;height:12px;font-size:8.5px;line-height:12px;color:#3a3a48;text-align:center;transform:rotate(-90deg)">4</div>
<div class="a" style="left:16.5px;top:508px;width:1px;height:1px;background:#6a6f77;"></div>
<div class="a" style="left:15px;top:520px;width:4px;height:1px;background:#8a8f97;"></div>
<div class="a" style="left:16.5px;top:531px;width:1px;height:1px;background:#6a6f77;"></div>
<div class="a" style="left:12px;top:537.1px;width:10px;height:12px;font-size:8.5px;line-height:12px;color:#3a3a48;text-align:center;transform:rotate(-90deg)">5</div>
<div class="a" style="left:16.5px;top:555px;width:1px;height:1px;background:#6a6f77;"></div>
<div class="a" style="left:15px;top:567px;width:4px;height:1px;background:#8a8f97;"></div>
<div class="a" style="left:16.5px;top:578px;width:1px;height:1px;background:#6a6f77;"></div>
<div class="a" style="left:12px;top:584.1px;width:10px;height:12px;font-size:8.5px;line-height:12px;color:#3a3a48;text-align:center;transform:rotate(-90deg)">6</div>
<div class="a" style="left:16.5px;top:602px;width:1px;height:1px;background:#6a6f77;"></div>
<div class="a" style="left:15px;top:614px;width:4px;height:1px;background:#8a8f97;"></div>
<div class="a" style="left:16.5px;top:625px;width:1px;height:1px;background:#6a6f77;"></div>
<div class="a" style="left:12px;top:631.1px;width:10px;height:12px;font-size:8.5px;line-height:12px;color:#3a3a48;text-align:center;transform:rotate(-90deg)">7</div>
<div class="a" style="left:16.5px;top:649px;width:1px;height:1px;background:#6a6f77;"></div>
<div class="a" style="left:15px;top:661px;width:4px;height:1px;background:#8a8f97;"></div>
<div class="a" style="left:16.5px;top:672px;width:1px;height:1px;background:#6a6f77;"></div>
<div class="a" style="left:12px;top:678.1px;width:10px;height:12px;font-size:8.5px;line-height:12px;color:#3a3a48;text-align:center;transform:rotate(-90deg)">8</div>
<div class="a" style="left:16.5px;top:696px;width:1px;height:1px;background:#6a6f77;"></div>
<div class="a" style="left:15px;top:708px;width:4px;height:1px;background:#8a8f97;"></div>
<div class="a" style="left:16.5px;top:719px;width:1px;height:1px;background:#6a6f77;"></div>
<div class="a" style="left:12px;top:725.0px;width:10px;height:12px;font-size:8.5px;line-height:12px;color:#3a3a48;text-align:center;transform:rotate(-90deg)">9</div>
<div class="a" style="left:16.5px;top:743px;width:1px;height:1px;background:#6a6f77;"></div>
<div class="a" style="left:15px;top:755px;width:4px;height:1px;background:#8a8f97;"></div>
<div class="a" style="left:16.5px;top:766px;width:1px;height:1px;background:#6a6f77;"></div>
<div class="a" style="left:12px;top:772.0px;width:10px;height:12px;font-size:8.5px;line-height:12px;color:#3a3a48;text-align:center;transform:rotate(-90deg)">10</div>
<div class="a" style="left:16.5px;top:790px;width:1px;height:1px;background:#6a6f77;"></div>
<div class="a" style="left:15px;top:801px;width:4px;height:1px;background:#8a8f97;"></div>
<div class="a" style="left:1186px;top:293px;width:9px;height:520px;background:#dfe3e9;border-left:1px solid #c8cdd4"></div>
<div class="a" style="left:1186px;top:298px;width:9px;height:13px;background:#f4f5f7;border:1px solid #a9afb8"></div>
<svg class="a" style="left:1187px;top:300px" width="8" height="9" viewBox="0 0 8 9"><circle cx="4" cy="4" r="3" fill="none" stroke="#555" stroke-width="0.8"/><rect x="1" y="6" width="6" height="2" fill="#555"/></svg>
<svg class="a" style="left:1187px;top:316px" width="8" height="5" viewBox="0 0 8 5"><path d="M0.5 4.5 L4 0.5 L7.5 4.5Z" fill="#444"/></svg>
<div class="a" style="left:1186px;top:328px;width:9px;height:17px;background:linear-gradient(90deg,#fbfbfc,#eceef2);border:1px solid #a9afb8;border-radius:1px"></div>
<div class="a" style="left:1188px;top:336px;width:5px;height:1px;background:#8a9099;"></div>
<svg class="a" style="left:1187px;top:765px" width="8" height="5" viewBox="0 0 8 5"><path d="M0.5 0.5 L4 4.5 L7.5 0.5Z" fill="#444"/></svg>
<div class="a" style="left:1186px;top:774px;width:9px;height:1px;background:#c8cdd4;"></div>
<svg class="a" style="left:1187px;top:777px" width="8" height="6" viewBox="0 0 8 6"><path d="M1 2.5 L4 0 L7 2.5Z M1 6 L4 3.5 L7 6Z" fill="#444"/></svg>
<svg class="a" style="left:1187px;top:789px" width="8" height="8" viewBox="0 0 8 8"><circle cx="4" cy="4" r="3" fill="#dfe3e9" stroke="#555" stroke-width="0.9"/></svg>
<svg class="a" style="left:1187px;top:803px" width="8" height="6" viewBox="0 0 8 6"><path d="M1 0 L4 2.5 L7 0Z M1 3.5 L4 6 L7 3.5Z" fill="#444"/></svg>
<div class="a" style="left:1098px;top:311px;width:6px;height:502px;background:linear-gradient(90deg,#9ea2aa,rgba(199,203,210,0));"></div>
<div class="a" style="left:13px;top:817.66px;font-size:8px;line-height:10px;color:#555d68;">Page: 1 of 9</div>
<div class="a" style="left:62px;top:816px;width:1px;height:13px;background:#c2c7ce;"></div>
<div class="a" style="left:68.3px;top:817.66px;font-size:8px;line-height:10px;color:#555d68;">Words: 1,920</div>
<div class="a" style="left:121px;top:816px;width:1px;height:13px;background:#c2c7ce;"></div>
<svg class="a" style="left:126px;top:816px" width="14" height="12" viewBox="0 0 14 12"><path d="M1 8 L6 5 L13 8 L8 11Z" fill="#fff" stroke="#3a6fd0" stroke-width="1"/><path d="M7 1 L12 6 M12 1 L7 6" stroke="#e02020" stroke-width="1.6"/></svg>
<div class="a" style="left:150px;top:817.66px;font-size:8px;line-height:10px;color:#555d68;">Dutch (Netherlands)</div>
<div class="a" style="left:226.8px;top:816px;width:1px;height:13px;background:#c2c7ce;"></div>
<div class="a" style="left:990px;top:815px;width:1px;height:14px;background:#c2c7ce;"></div>
<div class="a" style="left:993px;top:815px;width:14px;height:14px;background:linear-gradient(#fde9a4,#fbd46a);border:1px solid #e0b95a;border-radius:2px"></div>
<svg class="a" style="left:996px;top:818px" width="8" height="8" viewBox="0 0 8 8"><rect x="0.5" y="0.5" width="7" height="7" fill="#fff" stroke="#555" stroke-width="0.9"/><path d="M2 3H6M2 5H6" stroke="#555" stroke-width="0.8"/></svg>
<svg class="a" style="left:1010px;top:818px" width="10" height="8" viewBox="0 0 10 8"><path d="M0.5 0.5H4.5V7.5H0.5Z M5.5 0.5H9.5V7.5H5.5Z" fill="#fff" stroke="#555" stroke-width="0.8"/></svg>
<svg class="a" style="left:1024px;top:818px" width="10" height="9" viewBox="0 0 10 9"><rect x="0.5" y="0.5" width="8" height="6" fill="#fff" stroke="#555" stroke-width="0.8"/><circle cx="7.5" cy="6.5" r="2.3" fill="#3a9ad8"/></svg>
<svg class="a" style="left:1038px;top:818px" width="10" height="8" viewBox="0 0 10 8"><path d="M0 1H9M3 4H9M3 7H9" stroke="#666" stroke-width="0.9"/></svg>
<svg class="a" style="left:1052px;top:818px" width="10" height="8" viewBox="0 0 10 8"><path d="M0 1H9M0 3.5H9M0 6H9" stroke="#555" stroke-width="1"/></svg>
<div class="a" style="left:1069.3px;top:817.66px;font-size:8px;line-height:10px;color:#555d68;">160%</div>
<svg class="a" style="left:1093px;top:815px" width="14" height="14" viewBox="0 0 14 14"><circle cx="7" cy="7" r="6.3" fill="#f6f7f9" stroke="#8a9099" stroke-width="0.9"/><path d="M4 7H10" stroke="#444" stroke-width="1"/></svg>
<div class="a" style="left:1107px;top:822px;width:77px;height:1px;background:#a0a6ae;"></div>
<div class="a" style="left:1130px;top:820px;width:1px;height:5px;background:#a0a6ae;"></div>
<svg class="a" style="left:1145px;top:816px" width="10" height="12" viewBox="0 0 10 12"><path d="M0.5 0.5H9.5V8L5 11.5L0.5 8Z" fill="#f6f7f9" stroke="#8a9099" stroke-width="0.9"/></svg>
<svg class="a" style="left:1183px;top:815px" width="14" height="14" viewBox="0 0 14 14"><circle cx="7" cy="7" r="6.3" fill="#f6f7f9" stroke="#8a9099" stroke-width="0.9"/><path d="M4 7H10M7 4V10" stroke="#444" stroke-width="1"/></svg>
<div class="a" style="left:12px;top:830px;width:956px;height:26px;background:linear-gradient(90deg,#8b9cb6 0,#a0b4cf 12%,#a8bedb 30%,#a8bedb 80%,#a2b8d6);"></div>
<div class="a" style="left:968px;top:830px;width:227px;height:26px;background:linear-gradient(90deg,#a2b8d6,#8aa0be 30%,#879dba);"></div>
<div class="a" style="left:12px;top:830px;width:1183px;height:1px;background:#7b8ba3;"></div>
<svg class="a" style="left:14px;top:831px" width="28" height="26" viewBox="0 0 28 26"><defs><radialGradient id="orb" cx="50%" cy="35%" r="60%"><stop offset="0" stop-color="#6fb6ff"/><stop offset="1" stop-color="#0d3f8a"/></radialGradient></defs><circle cx="14" cy="14" r="13" fill="url(#orb)" stroke="#2a4a7a" stroke-width="0.8"/><path d="M7 8 Q10 6.5 13 8 V13 Q10 11.5 7 13Z" fill="#f25022"/><path d="M14 8 Q17 9.5 20 8 V13 Q17 14.5 14 13Z" fill="#7fba00"/><path d="M7 14 Q10 12.5 13 14 V19 Q10 17.5 7 19Z" fill="#00a4ef"/><path d="M14 14 Q17 15.5 20 14 V19 Q17 20.5 14 19Z" fill="#ffb900"/></svg>
<svg class="a" style="left:52px;top:834px" width="12" height="12" viewBox="0 0 12 12"><rect x="0" y="0" width="12" height="12" rx="1" fill="#f0a030"/><text x="1" y="9.5" font-size="9" font-weight="bold" fill="#fff" font-family="Liberation Sans">O</text></svg>
<svg class="a" style="left:69px;top:834px" width="12" height="12" viewBox="0 0 12 12"><rect x="0" y="0" width="12" height="12" rx="1" fill="#fff"/><text x="0.5" y="9.5" font-size="9" font-weight="bold" fill="#2b5bb8" font-family="Liberation Sans">W</text></svg>
<svg class="a" style="left:86px;top:834px" width="12" height="12" viewBox="0 0 12 12"><rect x="0" y="0" width="12" height="12" rx="1" fill="#dff0d8"/><text x="1" y="9.5" font-size="9" font-weight="bold" fill="#2a8a3a" font-family="Liberation Sans">X</text></svg>
<svg class="a" style="left:102px;top:834px" width="12" height="12" viewBox="0 0 12 12"><rect x="0" y="0" width="12" height="12" rx="1" fill="#f3c0a8"/><text x="1.5" y="9.5" font-size="9" font-weight="bold" fill="#d04a20" font-family="Liberation Sans">P</text></svg>
<svg class="a" style="left:120px;top:834px" width="10" height="12" viewBox="0 0 10 12"><rect x="0.5" y="0.5" width="9" height="11" fill="#fff" stroke="#667" stroke-width="0.7"/><rect x="2" y="4" width="6" height="4" fill="#5a7ab0"/></svg>
<svg class="a" style="left:136px;top:834px" width="12" height="12" viewBox="0 0 12 12"><circle cx="6" cy="6.5" r="4.5" fill="none" stroke="#3a9ae0" stroke-width="2"/><path d="M2 6.5H10" stroke="#3a9ae0" stroke-width="1.5"/><path d="M0.5 10 Q6 0 11.5 1.5" stroke="#f0c020" stroke-width="1" fill="none"/></svg>
<div class="a" style="left:170px;top:830.70px;font-size:10px;line-height:13px;color:#fff;">»</div>
<div class="a" style="left:183px;top:831px;width:38px;height:25px;background:linear-gradient(#c9d7ea,#b1c4de);border:1px solid #8ea2bf;border-bottom:none;border-radius:2px 2px 0 0"></div>
<div class="a" style="left:222px;top:831px;width:4px;height:25px;background:linear-gradient(90deg,#8ea2bf,#c9d7ea,#8ea2bf);"></div>
<div class="a" style="left:228px;top:831px;width:40px;height:25px;background:linear-gradient(#c9d7ea,#b1c4de);border:1px solid #8ea2bf;border-bottom:none;border-radius:2px 2px 0 0"></div>
<div class="a" style="left:271px;top:831px;width:41px;height:25px;background:linear-gradient(#c9d7ea,#b1c4de);border:1px solid #8ea2bf;border-bottom:none;border-radius:2px 2px 0 0"></div>
<div class="a" style="left:314px;top:831px;width:41px;height:25px;background:linear-gradient(#c9d7ea,#b1c4de);border:1px solid #8ea2bf;border-bottom:none;border-radius:2px 2px 0 0"></div>
<div class="a" style="left:357px;top:831px;width:41px;height:25px;background:linear-gradient(#c9d7ea,#b1c4de);border:1px solid #8ea2bf;border-bottom:none;border-radius:2px 2px 0 0"></div>
<div class="a" style="left:400px;top:831px;width:42px;height:25px;background:linear-gradient(#c9d7ea,#b1c4de);border:1px solid #8ea2bf;border-bottom:none;border-radius:2px 2px 0 0"></div>
<svg class="a" style="left:190px;top:832px" width="24" height="24" viewBox="0 0 24 24"><path d="M1 4 H9 L11 2 H23 V24 H1Z" fill="#f2cf6a"/><rect x="2" y="6" width="20" height="18" fill="#f7dc82"/><rect x="3" y="3" width="3" height="2" fill="#e04a3a"/><rect x="8" y="3" width="3" height="2" fill="#3aa04a"/><rect x="15" y="3" width="4" height="2" fill="#3a7ad0"/><rect x="4" y="14" width="16" height="10" fill="#5ab0e0"/><rect x="7" y="21" width="10" height="3" fill="#e8c050"/></svg>
<svg class="a" style="left:236px;top:833px" width="24" height="23" viewBox="0 0 24 23"><circle cx="11.5" cy="11.5" r="11" fill="#db4437"/><path d="M11.5 11.5 L1.5 16.5 A11 11 0 0 0 15 22.5Z" fill="#0f9d58"/><path d="M11.5 11.5 L15 22.5 A11 11 0 0 0 22.5 10 L11.5 6.5Z" fill="#f4b400"/><circle cx="11.5" cy="11.5" r="5" fill="#fff"/><circle cx="11.5" cy="11.5" r="4" fill="#4285f4"/><circle cx="18" cy="18" r="5" fill="#8a4ac8"/><text x="16" y="20.5" font-size="6.5" fill="#fff" font-family="Liberation Sans">v</text></svg>
<svg class="a" style="left:283px;top:833px" width="17" height="23" viewBox="0 0 17 23"><path d="M0.5 0.5 H11 L16.5 6 V23 H0.5Z" fill="#fafafa" stroke="#c8ccd2" stroke-width="0.6"/><path d="M11 0.5 V6 H16.5" fill="#e4e6ea"/></svg>
<svg class="a" style="left:321px;top:832px" width="25" height="24" viewBox="0 0 25 24"><rect x="5" y="2" width="19" height="22" fill="#f4f6fa" stroke="#8aa0c0" stroke-width="0.6"/><path d="M1 3 H16 V21 H1Z" fill="#2b5bb8"/><text x="1.5" y="17" font-size="13" font-weight="bold" fill="#fff" font-family="Liberation Sans">W</text><path d="M14 17 L24 13 L22 24 H12Z" fill="#dfe6f2"/></svg>
<svg class="a" style="left:364px;top:832px" width="31" height="24" viewBox="0 0 31 24"><rect x="0" y="0" width="31" height="28" rx="8" fill="#2d8cff"/><rect x="6" y="8" width="13" height="10" rx="2" fill="#fff"/><path d="M19.5 11.5 L25 8 V18 L19.5 14.5Z" fill="#fff"/></svg>
<svg class="a" style="left:408px;top:833px" width="24" height="23" viewBox="0 0 24 23"><ellipse cx="10" cy="8" rx="8" ry="6.5" fill="#fbe6e6" stroke="#e05050" stroke-width="1.2"/><path d="M6 3 L17 18 M14 4 L9 16" stroke="#8a8f96" stroke-width="1.5"/><circle cx="8" cy="18.5" r="3" fill="none" stroke="#3a9ad8" stroke-width="1.6"/><circle cx="18" cy="19" r="3" fill="none" stroke="#3a9ad8" stroke-width="1.6"/></svg>
<div class="a" style="left:991.8px;top:840.16px;font-size:8px;line-height:10px;color:#fff;">EN</div>
<svg class="a" style="left:1018px;top:842px" width="6" height="4" viewBox="0 0 6 4"><path d="M0 3.5 L3 0.5 L6 3.5Z" fill="#fff"/></svg>
<svg class="a" style="left:1034px;top:838px" width="13" height="13" viewBox="0 0 13 13"><rect x="0" y="0" width="13" height="13" rx="3" fill="#4aa53a"/><path d="M3 6.5 L5.5 9 L10 4" stroke="#fff" stroke-width="1.6" fill="none"/></svg>
<svg class="a" style="left:1053px;top:838px" width="13" height="13" viewBox="0 0 13 13"><circle cx="6.5" cy="6.5" r="6" fill="#7b5bd0"/><circle cx="6.5" cy="6.3" r="3.8" fill="none" stroke="#fff" stroke-width="1.2"/></svg>
<svg class="a" style="left:1072px;top:837px" width="13" height="14" viewBox="0 0 13 14"><path d="M1 1 V13" stroke="#333" stroke-width="1"/><path d="M1.5 1.5 H9 L8 4.5 L9 7.5 H1.5Z" fill="#fff"/><circle cx="9.5" cy="10.5" r="3" fill="#e02020"/><path d="M8.3 9.3 L10.7 11.7 M10.7 9.3 L8.3 11.7" stroke="#fff" stroke-width="0.8"/></svg>
<svg class="a" style="left:1090px;top:837px" width="13" height="14" viewBox="0 0 13 14"><rect x="0.5" y="1" width="8" height="6" fill="#dfe5ee" stroke="#333" stroke-width="0.8"/><rect x="4.5" y="5" width="8" height="6" fill="#dfe5ee" stroke="#333" stroke-width="0.8"/><path d="M2 11 V13 M10 11 V13" stroke="#333"/></svg>
<svg class="a" style="left:1110px;top:838px" width="12" height="12" viewBox="0 0 12 12"><path d="M0.5 4 H3 L7 0.5 V11.5 L3 8 H0.5Z" fill="#eef1f5" stroke="#444" stroke-width="0.7"/><path d="M8.5 3.5 Q10 6 8.5 8.5" stroke="#eef1f5" stroke-width="0.8" fill="none"/></svg>
<div class="a" style="left:1141.484375px;top:833.93px;font-size:9px;line-height:12px;color:#f4f6fa;">9:20 AM</div>
<div class="a" style="left:1135.4765625px;top:846.63px;font-size:9px;line-height:12px;color:#f4f6fa;">09/08/2021</div>
<div class="a" style="left:1189px;top:831px;width:6px;height:25px;background:linear-gradient(90deg,#6e7f98,#a5b5cb);border-left:1px solid #59677c"></div>
<div class="a" style="left:0;top:0;width:1544px;height:1024px;clip-path:inset(311px 0 211px 0)">
<div class="a" style="left:286px;top:505px;width:724px;height:37px;background:#a9c9ef"></div>
<div class="a" style="left:253px;top:542px;width:757px;height:112px;background:#a9c9ef"></div>
<div class="a" style="left:253px;top:654px;width:424px;height:48px;background:#a9c9ef"></div>
<div class="a" style="left:253px;top:311px;width:1px;height:504px;background:repeating-linear-gradient(#a0a0a0 0 2px,transparent 2px 4px)"></div>
<div class="a" style="left:1003px;top:311px;width:1px;height:504px;background:repeating-linear-gradient(#a0a0a0 0 2px,transparent 2px 4px)"></div>
<div class="a d" style="left:364px;top:307.88px;color:#000;font-size:21.7px;font-weight:bold;">THANH PHAN, KHOI LƯỢNG KHAO SAT ĐỊA HINH -</div>
<div class="a d" style="left:281px;top:344.98px;color:#000;font-size:21.7px;font-weight:bold;">PHẦN 2. CÔNG TRÌNH PHÒNG, CHỐNG SẠT LỞ BỜ SÔNG, BỜ BIỂN</div>
<div class="a d" style="left:254.8px;top:419.51px;color:#000;font-size:21.6px;font-weight:bold;">1.</div>
<div class="a d" style="left:278px;top:419.58px;color:#000;font-size:21.4px;font-weight:bold;">Phạm vi áp dụng</div>
<div class="a d" style="left:291px;top:467.38px;color:#ee0000;font-size:22px;word-spacing:-0.428px;">Tiêu chuẩn này quy định các yêu cầu về thành phần, khối lượng công tác khảo sát</div>
<div class="a d" style="left:253.8px;top:503.68px;color:#b8203f;font-size:22px;word-spacing:0.364px;"><span style="color:#7030a0">địa</span> <span style="color:#3b47c2">hình</span> cho các công trình chống sạt lở bờ sông, bờ biển như công trình kè trực tiếp</div>
<div class="a d" style="left:253.8px;top:541.18px;color:#b8203f;font-size:22px;word-spacing:0.701px;">bảo vệ bờ (công trình bảo vệ bờ bị động) và công trình kè gián tiếp bảo vệ bờ (công</div>
<div class="a d" style="left:253.8px;top:578.78px;color:#b8203f;font-size:22px;word-spacing:-0.062px;">trình bảo vệ bờ chủ động). Công trình kè trực tiếp bảo vệ bờ bao gồm kè tường đứng,</div>
<div class="a d" style="left:253.8px;top:616.18px;color:#b8203f;font-size:22px;word-spacing:-0.548px;">kè mái nghiêng và kè mái nghiêng kết hợp tường đứng. Công trình kè gián tiếp bảo vệ</div>
<div class="a d" style="left:253.8px;top:653.18px;color:#b8203f;font-size:22px;">bờ bao gồm kè mỏ hàn và công trình giảm sóng.</div>
<div class="a d" style="left:291px;top:702.18px;color:#000;font-size:22px;word-spacing:-0.881px;">Phạm vi áp dụng của tiêu chuẩn này bao gồm xây dựng mới hoặc sửa chữa, cải tạo</div>
<div class="a d" style="left:253.8px;top:739.58px;color:#000;font-size:22px;">các công trình chống sạt lở bờ sông, bờ biển.</div>
<div class="a d" style="left:291px;top:788.98px;color:#000;font-size:22px;word-spacing:1.202px;">Tiêu chuẩn này có thể áp dụng cho các công trình có điều kiện làm việc và đặc</div>
<div class="a" style="left:299px;top:522px;width:1px;height:10px;background:#111"></div>
<div class="a" style="left:297px;top:521px;width:2px;height:1px;background:#111"></div><div class="a" style="left:300px;top:521px;width:2px;height:1px;background:#111"></div>
<div class="a" style="left:297px;top:532px;width:2px;height:1px;background:#111"></div><div class="a" style="left:300px;top:532px;width:2px;height:1px;background:#111"></div>
</div></div>
<!-- word window -->
<!-- splitter -->
<div class="a" style="left:1204px;top:508px;width:2px;height:33px;background:#9a9a9a"></div>
<div class="a" style="left:1208px;top:508px;width:2px;height:33px;background:#9a9a9a"></div>
<!-- video -->
<svg class="a" style="left:1214px;top:441px" width="299" height="169" viewBox="0 0 299 169">
<defs>
<linearGradient id="wallU" x1="0" x2="1"><stop offset="0" stop-color="#ecebd9"/><stop offset="0.6" stop-color="#e6e5d0"/><stop offset="1" stop-color="#e2e6d4"/></linearGradient>
<linearGradient id="wallL" x1="0" x2="1"><stop offset="0" stop-color="#b8c6bd"/><stop offset="0.5" stop-color="#c6d3cb"/><stop offset="1" stop-color="#d4e2d9"/></linearGradient><linearGradient id="wallV" x1="0" y1="0" x2="0" y2="1"><stop offset="0.4" stop-color="#6a7a70" stop-opacity="0"/><stop offset="1" stop-color="#6a7a70" stop-opacity="0.18"/></linearGradient>
<radialGradient id="face" cx="0.5" cy="0.45" r="0.6"><stop offset="0" stop-color="#d8b59c"/><stop offset="0.7" stop-color="#c49c80"/><stop offset="1" stop-color="#9c7a62"/></radialGradient>
<linearGradient id="shirt" x1="0" x2="1"><stop offset="0" stop-color="#e6eee8"/><stop offset="0.5" stop-color="#eef4f0"/><stop offset="1" stop-color="#e2ebe6"/></linearGradient>
<filter id="bl" x="-5%" y="-5%" width="110%" height="110%"><feGaussianBlur stdDeviation="1.2"/></filter>
<filter id="bl2"><feGaussianBlur stdDeviation="0.7"/></filter>
<pattern id="str" width="4" height="10" patternUnits="userSpaceOnUse" patternTransform="rotate(8)"><rect width="4" height="10" fill="none"/><rect x="0" width="1" height="10" fill="#c4d0cc" opacity="0.6"/></pattern>
</defs>
<rect width="299" height="169" fill="url(#wallL)"/><rect width="299" height="169" fill="url(#wallV)"/>
<rect width="299" height="47" fill="url(#wallU)"/>
<rect y="46" width="299" height="20" fill="#c2cdcb"/>
<g fill="#5e6868" opacity="0.8"><rect x="6.0" y="47.3" width="1.6" height="1.3"/><rect x="9.0" y="63.6" width="1.6" height="1.3"/><rect x="15.6" y="47.3" width="1.6" height="1.3"/><rect x="18.6" y="63.6" width="1.6" height="1.3"/><rect x="25.2" y="47.3" width="1.6" height="1.3"/><rect x="28.2" y="63.6" width="1.6" height="1.3"/><rect x="34.8" y="47.3" width="1.6" height="1.3"/><rect x="37.8" y="63.6" width="1.6" height="1.3"/><rect x="44.4" y="47.3" width="1.6" height="1.3"/><rect x="47.4" y="63.6" width="1.6" height="1.3"/><rect x="54.0" y="47.3" width="1.6" height="1.3"/><rect x="57.0" y="63.6" width="1.6" height="1.3"/><rect x="63.6" y="47.3" width="1.6" height="1.3"/><rect x="66.6" y="63.6" width="1.6" height="1.3"/><rect x="73.2" y="47.3" width="1.6" height="1.3"/><rect x="76.2" y="63.6" width="1.6" height="1.3"/><rect x="82.8" y="47.3" width="1.6" height="1.3"/><rect x="85.8" y="63.6" width="1.6" height="1.3"/><rect x="92.4" y="47.3" width="1.6" height="1.3"/><rect x="95.4" y="63.6" width="1.6" height="1.3"/><rect x="102.0" y="47.3" width="1.6" height="1.3"/><rect x="105.0" y="63.6" width="1.6" height="1.3"/><rect x="111.6" y="47.3" width="1.6" height="1.3"/><rect x="114.6" y="63.6" width="1.6" height="1.3"/><rect x="121.2" y="47.3" width="1.6" height="1.3"/><rect x="124.2" y="63.6" width="1.6" height="1.3"/><rect x="130.8" y="47.3" width="1.6" height="1.3"/><rect x="133.8" y="63.6" width="1.6" height="1.3"/><rect x="140.4" y="47.3" width="1.6" height="1.3"/><rect x="143.4" y="63.6" width="1.6" height="1.3"/><rect x="150.0" y="47.3" width="1.6" height="1.3"/><rect x="153.0" y="63.6" width="1.6" height="1.3"/><rect x="159.6" y="47.3" width="1.6" height="1.3"/><rect x="162.6" y="63.6" width="1.6" height="1.3"/><rect x="169.2" y="47.3" width="1.6" height="1.3"/><rect x="172.2" y="63.6" width="1.6" height="1.3"/><rect x="178.8" y="47.3" width="1.6" height="1.3"/><rect x="181.8" y="63.6" width="1.6" height="1.3"/><rect x="188.4" y="47.3" width="1.6" height="1.3"/><rect x="191.4" y="63.6" width="1.6" height="1.3"/><rect x="198.0" y="47.3" width="1.6" height="1.3"/><rect x="201.0" y="63.6" width="1.6" height="1.3"/><rect x="207.6" y="47.3" width="1.6" height="1.3"/><rect x="210.6" y="63.6" width="1.6" height="1.3"/><rect x="217.2" y="47.3" width="1.6" height="1.3"/><rect x="220.2" y="63.6" width="1.6" height="1.3"/><rect x="226.8" y="47.3" width="1.6" height="1.3"/><rect x="229.8" y="63.6" width="1.6" height="1.3"/><rect x="236.4" y="47.3" width="1.6" height="1.3"/><rect x="239.4" y="63.6" width="1.6" height="1.3"/><rect x="246.0" y="47.3" width="1.6" height="1.3"/><rect x="249.0" y="63.6" width="1.6" height="1.3"/><rect x="255.6" y="47.3" width="1.6" height="1.3"/><rect x="258.6" y="63.6" width="1.6" height="1.3"/><rect x="265.2" y="47.3" width="1.6" height="1.3"/><rect x="268.2" y="63.6" width="1.6" height="1.3"/><rect x="274.8" y="47.3" width="1.6" height="1.3"/><rect x="277.8" y="63.6" width="1.6" height="1.3"/><rect x="284.4" y="47.3" width="1.6" height="1.3"/><rect x="287.4" y="63.6" width="1.6" height="1.3"/><rect x="294.0" y="47.3" width="1.6" height="1.3"/><rect x="297.0" y="63.6" width="1.6" height="1.3"/><rect x="303.6" y="47.3" width="1.6" height="1.3"/><rect x="306.6" y="63.6" width="1.6" height="1.3"/></g>
<g filter="url(#bl2)"><circle cx="15" cy="56" r="4.2" fill="#e4eae8" opacity="0.9"/><path d="M9 59 l4 3 M18 52 l5 -1" stroke="#4a5454" stroke-width="1.6"/><rect x="19" y="58.5" width="10" height="1" fill="#7a8484"/><ellipse cx="45" cy="57.5" rx="3.5" ry="5" fill="#5a6464"/><circle cx="46" cy="61" r="1.5" fill="#3e4646"/><circle cx="73" cy="56" r="4.2" fill="#e4eae8" opacity="0.9"/><path d="M67 59 l4 3 M76 52 l5 -1" stroke="#4a5454" stroke-width="1.6"/><rect x="77" y="58.5" width="10" height="1" fill="#7a8484"/><ellipse cx="103" cy="57.5" rx="3.5" ry="5" fill="#5a6464"/><circle cx="104" cy="61" r="1.5" fill="#3e4646"/><circle cx="131" cy="56" r="4.2" fill="#e4eae8" opacity="0.9"/><path d="M125 59 l4 3 M134 52 l5 -1" stroke="#4a5454" stroke-width="1.6"/><rect x="135" y="58.5" width="10" height="1" fill="#7a8484"/><ellipse cx="161" cy="57.5" rx="3.5" ry="5" fill="#5a6464"/><circle cx="162" cy="61" r="1.5" fill="#3e4646"/><circle cx="189" cy="56" r="4.2" fill="#e4eae8" opacity="0.9"/><path d="M183 59 l4 3 M192 52 l5 -1" stroke="#4a5454" stroke-width="1.6"/><rect x="193" y="58.5" width="10" height="1" fill="#7a8484"/><ellipse cx="219" cy="57.5" rx="3.5" ry="5" fill="#5a6464"/><circle cx="220" cy="61" r="1.5" fill="#3e4646"/><circle cx="247" cy="56" r="4.2" fill="#e4eae8" opacity="0.9"/><path d="M241 59 l4 3 M250 52 l5 -1" stroke="#4a5454" stroke-width="1.6"/><rect x="251" y="58.5" width="10" height="1" fill="#7a8484"/><ellipse cx="277" cy="57.5" rx="3.5" ry="5" fill="#5a6464"/><circle cx="278" cy="61" r="1.5" fill="#3e4646"/><circle cx="305" cy="56" r="4.2" fill="#e4eae8" opacity="0.9"/><path d="M299 59 l4 3 M308 52 l5 -1" stroke="#4a5454" stroke-width="1.6"/><rect x="309" y="58.5" width="10" height="1" fill="#7a8484"/><ellipse cx="335" cy="57.5" rx="3.5" ry="5" fill="#5a6464"/><circle cx="336" cy="61" r="1.5" fill="#3e4646"/></g>
<g filter="url(#bl)">
<path d="M88 84 Q89 67 110 66 L160 66 L160 140 L88 140 Z" fill="#1f2624"/>
<path d="M236 68 L250 68 Q258 70 259 85 L259 120 L236 120 Z" fill="#1f2624"/>
<path d="M180 110 L180 136 Q200 144 226 136 L226 108 Z" fill="#9c7c66"/>
<path d="M159 45 Q156 80 163 100 Q174 122 196 127 Q204 128 212 126 Q234 118 241 98 Q247 75 245 45 Q246 22 200 22 Q158 22 159 45 Z" fill="url(#face)"/>
<path d="M151 52 Q145 64 150 80 Q156 86 162 78 L160 52 Z" fill="#b48e76"/>
<path d="M241 52 Q251 60 248 76 Q244 84 240 76 Z" fill="#ae886f"/>
<path d="M147 44 Q141 12 168 -6 L236 -6 Q262 6 253 40 L249 57 Q246 44 240 36 Q214 24 186 30 Q172 34 167 46 Q163 54 160 59 Q152 56 147 44 Z" fill="#262a26"/>
<path d="M190 6 Q210 0 230 6 Q238 10 238 16 Q216 8 196 11 Z" fill="#50544e" opacity="0.6"/>
<ellipse cx="185.5" cy="65" rx="8.5" ry="2.8" fill="#2e201a"/>
<ellipse cx="223.5" cy="65" rx="7.5" ry="2.8" fill="#2e201a"/>
<path d="M175 58 Q185 55 195 57" stroke="#5a4636" stroke-width="1.5" fill="none"/>
<path d="M214 57 Q223 55 232 58" stroke="#5a4636" stroke-width="1.5" fill="none"/>
<path d="M197 90 Q205 95 214 90" stroke="#8a6450" stroke-width="1.6" fill="none"/>
<path d="M191 106 Q203 101 216 106 Q203 113 191 106Z" fill="#5a2e2a"/>
<path d="M97 169 Q100 126 158 98 Q170 124 187 140 L198 142 L208 140 Q220 124 229 108 Q262 116 299 156 L299 169 Z" fill="url(#shirt)"/>
<path d="M97 169 Q100 126 158 98 Q170 124 187 140 L198 142 L208 140 Q220 124 229 108 Q262 116 299 156 L299 169 Z" fill="url(#str)"/>
<path d="M162 100 Q174 128 194 142 M229 108 Q218 130 202 142" stroke="#c4d0ca" stroke-width="1.4" fill="none"/>
</g>
<rect x="0" y="144.5" width="141" height="24.5" fill="#464a48" opacity="0.92"/>
<rect x="4" y="161" width="3" height="5" fill="#fff"/><rect x="8.5" y="157" width="3" height="9" fill="#fff"/><rect x="13" y="153" width="3" height="13" fill="#fff"/><rect x="17.5" y="149" width="3" height="17" fill="#fff"/>
<text x="28" y="163.5" font-size="15.3" fill="#fff" font-family="Liberation Sans">Vo Cong Hoang</text>
</svg>
<!-- toolbar -->
<svg class="a" style="left:40px;top:962px" width="36" height="38" viewBox="0 0 36 38">
 <rect x="13.5" y="6" width="9.3" height="17.5" rx="4.6" fill="#a6a6a6"/>
 <path d="M9.8 18 C9.8 24.5 13 28 18 28 C23 28 26.2 24.5 26.2 18" stroke="#a6a6a6" stroke-width="1.9" fill="none"/>
 <path d="M18 28 V33.5 M13.5 33.8 H22.5" stroke="#a6a6a6" stroke-width="1.9" fill="none"/>
 <path d="M3.5 34 L32.5 5.5" stroke="#1a1a1a" stroke-width="4.5"/>
 <path d="M3.5 34 L32.5 5.5" stroke="#e05252" stroke-width="2"/>
</svg>
<svg class="a" style="left:91px;top:977px" width="12" height="9" viewBox="0 0 12 9"><path d="M1.5 7 L6 2.5 L10.5 7" stroke="#a6a6a6" stroke-width="1.6" fill="none"/></svg>
<div class="a tl" style="left:30.6px;font-size:15.5px;top:1002.3px;transform:scaleX(1.0022);transform-origin:0 0">Unmute</div>
<svg class="a" style="left:158px;top:972px" width="32" height="20" viewBox="0 0 32 20"><rect x="0.5" y="0.5" width="22" height="18" rx="4" fill="#a6a6a6"/><path d="M23.5 7 L30.5 2 V17 L23.5 12Z" fill="#a6a6a6"/></svg>
<svg class="a" style="left:214px;top:977px" width="12" height="9" viewBox="0 0 12 9"><path d="M1.5 7 L6 2.5 L10.5 7" stroke="#a6a6a6" stroke-width="1.6" fill="none"/></svg>
<div class="a tl" style="left:137.4px;font-size:15.5px;top:1002.3px;transform:scaleX(0.9873);transform-origin:0 0">Stop Video</div>
<svg class="a" style="left:343px;top:969px" width="26" height="27" viewBox="0 0 26 27"><path d="M13 1 C9.5 4 6 5.5 2.6 6.2 V12.5 C2.6 18.5 7 23 13 25.3 C19 23 23.4 18.5 23.4 12.5 V6.2 C20 5.5 16.5 4 13 1Z" stroke="#a6a6a6" stroke-width="1.5" fill="none"/><path d="M13 1 C9.5 4 6 5.5 2.6 6.2 V12.9 H13Z" fill="#a6a6a6"/><path d="M13 12.9 H23.4 C23.2 18.5 19 23 13 25.3Z" fill="#a6a6a6"/></svg>
<div class="a tl" style="left:328.4px;font-size:15.5px;top:1002.3px;transform:scaleX(0.9750);transform-origin:0 0">Security</div>
<svg class="a" style="left:471px;top:970px" width="32" height="24" viewBox="0 0 32 24"><circle cx="11" cy="6" r="5" fill="#a6a6a6"/><path d="M0.5 23.5 C0.5 16 5 13 11 13 C17 13 21.5 16 21.5 23.5Z" fill="#a6a6a6"/><circle cx="22.5" cy="8" r="4.3" fill="#a6a6a6"/><path d="M21 15.5 C27 14 31 17 31 23.5 H23.5 C23.5 20 22.7 17.5 21 15.5Z" fill="#a6a6a6"/></svg>
<div class="a" style="left:507px;top:971px;font-size:15px;color:#b4b4b4">6</div>
<svg class="a" style="left:547px;top:977px" width="12" height="9" viewBox="0 0 12 9"><path d="M1.5 7 L6 2.5 L10.5 7" stroke="#a6a6a6" stroke-width="1.6" fill="none"/></svg>
<div class="a tl" style="left:447.3px;font-size:15.5px;top:1002.3px;transform:scaleX(0.9841);transform-origin:0 0">Participants</div>
<svg class="a" style="left:607px;top:970px" width="24" height="24" viewBox="0 0 24 24"><rect x="0" y="12" width="6" height="11.5" rx="1" fill="#a6a6a6"/><rect x="9" y="0.5" width="6" height="23" rx="1" fill="#a6a6a6"/><rect x="18" y="7" width="6" height="16.5" rx="1" fill="#a6a6a6"/></svg>
<div class="a tl" style="left:603.4px;font-size:15.5px;top:1002.3px;transform:scaleX(0.9105);transform-origin:0 0">Polls</div>
<svg class="a" style="left:706px;top:970px" width="26" height="24" viewBox="0 0 26 24"><path d="M4 0.5 H22 C24 0.5 25.5 2 25.5 4 V13.5 C25.5 15.5 24 17 22 17 H10 L5.5 22.5 V17 H4 C2 17 0.5 15.5 0.5 13.5 V4 C0.5 2 2 0.5 4 0.5Z" fill="#a6a6a6"/></svg>
<div class="a tl" style="left:703px;font-size:15.5px;top:1002.3px;transform:scaleX(0.9466);transform-origin:0 0">Chat</div>
<svg class="a" style="left:815px;top:970px" width="30" height="23" viewBox="0 0 30 23"><rect x="0" y="0" width="30" height="23" rx="3" fill="#23d25f"/><path d="M15 5 V17 M10 10 L15 5 L20 10" stroke="#111" stroke-width="2.4" fill="none"/></svg>
<svg class="a" style="left:870px;top:977px" width="12" height="9" viewBox="0 0 12 9"><path d="M1.5 7 L6 2.5 L10.5 7" stroke="#a6a6a6" stroke-width="1.6" fill="none"/></svg>
<div class="a tl" style="left:786.3px;color:#23d25f;font-size:15.5px;top:1002.3px;transform:scaleX(0.9306);transform-origin:0 0">Share Screen</div>
<svg class="a" style="left:929px;top:969px" width="26" height="26" viewBox="0 0 26 26"><circle cx="13" cy="13" r="11.5" stroke="#a6a6a6" stroke-width="2" fill="none"/><circle cx="13" cy="13" r="8.5" fill="#a6a6a6"/></svg>
<div class="a tl" style="left:918.3px;font-size:15.5px;top:1002.3px;transform:scaleX(0.9506);transform-origin:0 0">Record</div>
<svg class="a" style="left:1045px;top:969px" width="26" height="26" viewBox="0 0 26 26"><rect x="0" y="0" width="11.5" height="11.5" rx="2" fill="#a6a6a6"/><rect x="14.5" y="0" width="11.5" height="11.5" rx="2" fill="#a6a6a6"/><rect x="0" y="14.5" width="11.5" height="11.5" rx="2" fill="#a6a6a6"/><rect x="14.5" y="14.5" width="11.5" height="11.5" rx="2" fill="#a6a6a6"/></svg>
<div class="a tl" style="left:1002.8px;font-size:15.5px;top:1002.3px;transform:scaleX(0.9614);transform-origin:0 0">Breakout Rooms</div>
<svg class="a" style="left:1161px;top:966px" width="30" height="28" viewBox="0 0 30 28"><circle cx="12" cy="15.5" r="11.5" fill="#a6a6a6"/><circle cx="8" cy="13" r="1.5" fill="#1a1a1a"/><circle cx="16" cy="13" r="1.5" fill="#1a1a1a"/><path d="M7 17.5 C9 21 15 21 17 17.5" stroke="#1a1a1a" stroke-width="1.7" fill="none"/><path d="M24 1 V10 M19.5 5.5 H28.5" stroke="#1a1a1a" stroke-width="4"/><path d="M24 1.5 V9.5 M20 5.5 H28" stroke="#a6a6a6" stroke-width="1.6"/></svg>
<div class="a tl" style="left:1141px;font-size:15.5px;top:1002.3px;transform:scaleX(0.9429);transform-origin:0 0">Reactions</div>
<svg class="a" style="left:1261px;top:978px" width="27" height="7" viewBox="0 0 27 7"><circle cx="3.5" cy="3.5" r="3" fill="#a6a6a6"/><circle cx="13.5" cy="3.5" r="3" fill="#a6a6a6"/><circle cx="23.5" cy="3.5" r="3" fill="#a6a6a6"/></svg>
<div class="a tl" style="left:1255.5px;font-size:15.5px;top:1002.3px;transform:scaleX(1.0275);transform-origin:0 0">More</div>
<div class="a" style="left:1428px;top:976px;width:77px;height:34px;border-radius:7px;background:#b72227"></div>
<div class="a" style="left:1453.5px;top:984.5px;font-size:14px;font-weight:bold;color:#fff;line-height:17px">End</div>
</body></html>
